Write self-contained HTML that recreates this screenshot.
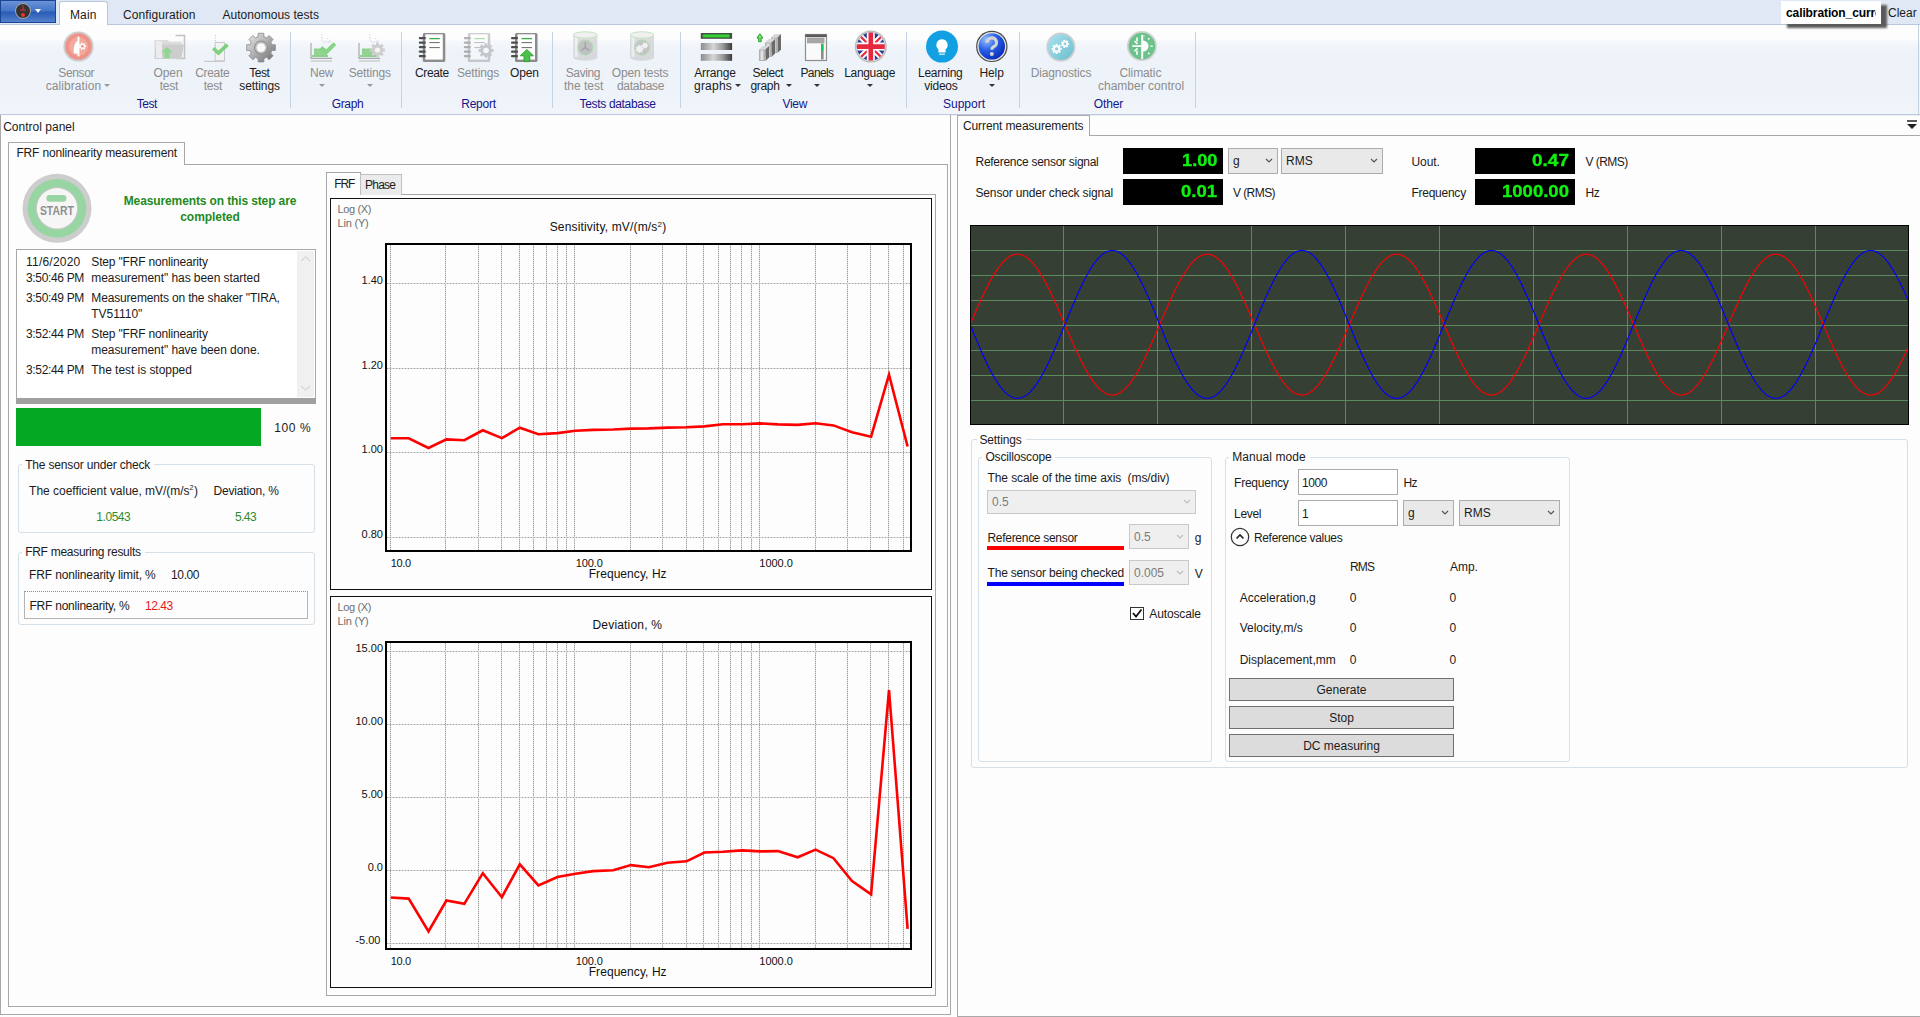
<!DOCTYPE html><html><head><meta charset="utf-8"><style>html,body{margin:0;padding:0;width:1920px;height:1017px;overflow:hidden;background:#fdfdfd;position:relative;font-family:"Liberation Sans",sans-serif}</style></head><body><div style="position:absolute;left:0px;top:0px;width:1920px;height:24px;background:#dfe8f4"></div>
<div style="position:absolute;left:0px;top:24px;width:1920px;height:1px;background:#b7c7dd"></div>
<div style="position:absolute;left:0px;top:25px;width:1920px;height:89px;background:linear-gradient(to bottom,#fdfdfe 0px,#fdfdfe 14px,#f5f8fc 16px,#eef3f9 26px,#eef3f9 70px,#f1f5fa 89px)"></div>
<div style="position:absolute;left:1918px;top:25px;width:1px;height:89px;background:#c3d0e0"></div>
<div style="position:absolute;left:0px;top:114px;width:1920px;height:1px;background:#b9c8dc"></div>
<div style="position:absolute;left:0px;top:115px;width:1920px;height:1px;background:#eef1f4"></div>
<div style="position:absolute;left:0px;top:0px;width:56px;height:23px;background:linear-gradient(to bottom,#6a93d8 0%,#4676c8 45%,#2a5cb8 55%,#5582cc 100%);border:1px solid #1a4494;box-sizing:border-box"></div>
<svg style="position:absolute;left:14px;top:2px" width="40" height="20" viewBox="0 0 40 20"><circle cx="9" cy="9" r="7.5" fill="#333" stroke="#aaa" stroke-width="1"/><circle cx="9" cy="13" r="2" fill="#e33"/><path d="M9 3v5M6 8h6" stroke="#d33" stroke-width="1"/><path d="M21 7h6l-3 4z" fill="#fff"/></svg>
<div style="position:absolute;left:59px;top:1px;width:49px;height:24px;background:#fff;border:1px solid #b7c7dd;border-bottom:none;border-radius:3px 3px 0 0;box-sizing:border-box"></div>
<div style="position:absolute;left:70.00px;top:9.14px;font-family:&quot;Liberation Sans&quot;,sans-serif;font-size:12px;line-height:12px;font-weight:400;color:#1b1b1b;white-space:pre;letter-spacing:0.121px;">Main</div>
<div style="position:absolute;left:123.00px;top:9.14px;font-family:&quot;Liberation Sans&quot;,sans-serif;font-size:12px;line-height:12px;font-weight:400;color:#1b1b1b;white-space:pre;letter-spacing:0.093px;">Configuration</div>
<div style="position:absolute;left:222.50px;top:9.14px;font-family:&quot;Liberation Sans&quot;,sans-serif;font-size:12px;line-height:12px;font-weight:400;color:#1b1b1b;white-space:pre;letter-spacing:0.027px;">Autonomous tests</div>
<div style="position:absolute;left:1787px;top:5px;width:100px;height:23px;background:#5a5a5a;filter:blur(1.2px)"></div>
<div style="position:absolute;left:1781px;top:1px;width:100px;height:23px;background:#fff;overflow:hidden"></div>
<div style="position:absolute;left:1781px;top:1px;width:95px;height:23px;overflow:hidden"><div style="position:absolute;left:5px;top:5.5px;font-family:&quot;Liberation Sans&quot;,sans-serif;font-size:12px;line-height:12px;font-weight:700;color:#000;white-space:pre;letter-spacing:-0.1px">calibration_current</div></div>
<div style="position:absolute;left:1888.00px;top:6.54px;font-family:&quot;Liberation Sans&quot;,sans-serif;font-size:12px;line-height:12px;font-weight:400;color:#1b1b1b;white-space:pre;">Clear</div>
<div style="position:absolute;left:290px;top:32px;width:1px;height:76px;background:#c5d3e4"></div>
<div style="position:absolute;left:401px;top:32px;width:1px;height:76px;background:#c5d3e4"></div>
<div style="position:absolute;left:552px;top:32px;width:1px;height:76px;background:#c5d3e4"></div>
<div style="position:absolute;left:680px;top:32px;width:1px;height:76px;background:#c5d3e4"></div>
<div style="position:absolute;left:906px;top:32px;width:1px;height:76px;background:#c5d3e4"></div>
<div style="position:absolute;left:1019px;top:32px;width:1px;height:76px;background:#c5d3e4"></div>
<div style="position:absolute;left:1195px;top:32px;width:1px;height:76px;background:#c5d3e4"></div>
<div style="position:absolute;left:58.25px;top:66.84px;font-family:&quot;Liberation Sans&quot;,sans-serif;font-size:12px;line-height:12px;font-weight:400;color:#8c8c8c;white-space:pre;letter-spacing:-0.339px;">Sensor</div>
<div style="position:absolute;left:45.75px;top:79.84px;font-family:&quot;Liberation Sans&quot;,sans-serif;font-size:12px;line-height:12px;font-weight:400;color:#8c8c8c;white-space:pre;letter-spacing:0.072px;">calibration</div>
<svg style="position:absolute;left:104px;top:84px" width="6" height="4" viewBox="0 0 6 4"><path d="M0 0h6l-3 3z" fill="#9a9a9a"/></svg>
<div style="position:absolute;left:153.50px;top:66.84px;font-family:&quot;Liberation Sans&quot;,sans-serif;font-size:12px;line-height:12px;font-weight:400;color:#8c8c8c;white-space:pre;letter-spacing:-0.090px;">Open</div>
<div style="position:absolute;left:159.75px;top:79.84px;font-family:&quot;Liberation Sans&quot;,sans-serif;font-size:12px;line-height:12px;font-weight:400;color:#8c8c8c;white-space:pre;letter-spacing:-0.211px;">test</div>
<div style="position:absolute;left:195.25px;top:66.84px;font-family:&quot;Liberation Sans&quot;,sans-serif;font-size:12px;line-height:12px;font-weight:400;color:#8c8c8c;white-space:pre;letter-spacing:-0.339px;">Create</div>
<div style="position:absolute;left:203.75px;top:79.84px;font-family:&quot;Liberation Sans&quot;,sans-serif;font-size:12px;line-height:12px;font-weight:400;color:#8c8c8c;white-space:pre;letter-spacing:-0.211px;">test</div>
<div style="position:absolute;left:249.25px;top:66.84px;font-family:&quot;Liberation Sans&quot;,sans-serif;font-size:12px;line-height:12px;font-weight:400;color:#1b1b1b;white-space:pre;letter-spacing:-0.504px;">Test</div>
<div style="position:absolute;left:239.23px;top:79.84px;font-family:&quot;Liberation Sans&quot;,sans-serif;font-size:12px;line-height:12px;font-weight:400;color:#1b1b1b;white-space:pre;letter-spacing:-0.076px;">settings</div>
<div style="position:absolute;left:136.75px;top:97.64px;font-family:&quot;Liberation Sans&quot;,sans-serif;font-size:12px;line-height:12px;font-weight:400;color:#15158a;white-space:pre;letter-spacing:-0.504px;">Test</div>
<div style="position:absolute;left:309.98px;top:66.84px;font-family:&quot;Liberation Sans&quot;,sans-serif;font-size:12px;line-height:12px;font-weight:400;color:#8c8c8c;white-space:pre;letter-spacing:-0.255px;">New</div>
<svg style="position:absolute;left:319px;top:84px" width="6" height="4" viewBox="0 0 6 4"><path d="M0 0h6l-3 3z" fill="#9a9a9a"/></svg>
<div style="position:absolute;left:348.75px;top:66.84px;font-family:&quot;Liberation Sans&quot;,sans-serif;font-size:12px;line-height:12px;font-weight:400;color:#8c8c8c;white-space:pre;letter-spacing:-0.170px;">Settings</div>
<svg style="position:absolute;left:367px;top:84px" width="6" height="4" viewBox="0 0 6 4"><path d="M0 0h6l-3 3z" fill="#9a9a9a"/></svg>
<div style="position:absolute;left:331.75px;top:97.64px;font-family:&quot;Liberation Sans&quot;,sans-serif;font-size:12px;line-height:12px;font-weight:400;color:#15158a;white-space:pre;letter-spacing:-0.372px;">Graph</div>
<div style="position:absolute;left:415.02px;top:66.84px;font-family:&quot;Liberation Sans&quot;,sans-serif;font-size:12px;line-height:12px;font-weight:400;color:#1b1b1b;white-space:pre;letter-spacing:-0.380px;">Create</div>
<div style="position:absolute;left:456.98px;top:66.84px;font-family:&quot;Liberation Sans&quot;,sans-serif;font-size:12px;line-height:12px;font-weight:400;color:#8c8c8c;white-space:pre;letter-spacing:-0.139px;">Settings</div>
<div style="position:absolute;left:510.02px;top:66.84px;font-family:&quot;Liberation Sans&quot;,sans-serif;font-size:12px;line-height:12px;font-weight:400;color:#1b1b1b;white-space:pre;letter-spacing:-0.152px;">Open</div>
<div style="position:absolute;left:461.25px;top:97.64px;font-family:&quot;Liberation Sans&quot;,sans-serif;font-size:12px;line-height:12px;font-weight:400;color:#15158a;white-space:pre;letter-spacing:-0.255px;">Report</div>
<div style="position:absolute;left:565.77px;top:66.84px;font-family:&quot;Liberation Sans&quot;,sans-serif;font-size:12px;line-height:12px;font-weight:400;color:#8c8c8c;white-space:pre;letter-spacing:-0.409px;">Saving</div>
<div style="position:absolute;left:563.98px;top:79.84px;font-family:&quot;Liberation Sans&quot;,sans-serif;font-size:12px;line-height:12px;font-weight:400;color:#8c8c8c;white-space:pre;letter-spacing:-0.014px;">the test</div>
<div style="position:absolute;left:611.75px;top:66.84px;font-family:&quot;Liberation Sans&quot;,sans-serif;font-size:12px;line-height:12px;font-weight:400;color:#8c8c8c;white-space:pre;letter-spacing:-0.153px;">Open tests</div>
<div style="position:absolute;left:616.98px;top:79.84px;font-family:&quot;Liberation Sans&quot;,sans-serif;font-size:12px;line-height:12px;font-weight:400;color:#8c8c8c;white-space:pre;letter-spacing:-0.268px;">database</div>
<div style="position:absolute;left:579.48px;top:97.64px;font-family:&quot;Liberation Sans&quot;,sans-serif;font-size:12px;line-height:12px;font-weight:400;color:#15158a;white-space:pre;letter-spacing:-0.319px;">Tests database</div>
<div style="position:absolute;left:694.25px;top:66.84px;font-family:&quot;Liberation Sans&quot;,sans-serif;font-size:12px;line-height:12px;font-weight:400;color:#1b1b1b;white-space:pre;letter-spacing:-0.172px;">Arrange</div>
<div style="position:absolute;left:694.00px;top:79.84px;font-family:&quot;Liberation Sans&quot;,sans-serif;font-size:12px;line-height:12px;font-weight:400;color:#1b1b1b;white-space:pre;letter-spacing:0.216px;">graphs</div>
<svg style="position:absolute;left:734.5px;top:84px" width="6" height="4" viewBox="0 0 6 4"><path d="M0 0h6l-3 3z" fill="#333"/></svg>
<div style="position:absolute;left:752.52px;top:66.84px;font-family:&quot;Liberation Sans&quot;,sans-serif;font-size:12px;line-height:12px;font-weight:400;color:#1b1b1b;white-space:pre;letter-spacing:-0.435px;">Select</div>
<div style="position:absolute;left:750.50px;top:79.84px;font-family:&quot;Liberation Sans&quot;,sans-serif;font-size:12px;line-height:12px;font-weight:400;color:#1b1b1b;white-space:pre;letter-spacing:-0.341px;">graph</div>
<svg style="position:absolute;left:785.5px;top:84px" width="6" height="4" viewBox="0 0 6 4"><path d="M0 0h6l-3 3z" fill="#333"/></svg>
<div style="position:absolute;left:800.52px;top:66.84px;font-family:&quot;Liberation Sans&quot;,sans-serif;font-size:12px;line-height:12px;font-weight:400;color:#1b1b1b;white-space:pre;letter-spacing:-0.659px;">Panels</div>
<svg style="position:absolute;left:814px;top:84px" width="6" height="4" viewBox="0 0 6 4"><path d="M0 0h6l-3 3z" fill="#333"/></svg>
<div style="position:absolute;left:844.23px;top:66.84px;font-family:&quot;Liberation Sans&quot;,sans-serif;font-size:12px;line-height:12px;font-weight:400;color:#1b1b1b;white-space:pre;letter-spacing:-0.330px;">Language</div>
<svg style="position:absolute;left:867px;top:84px" width="6" height="4" viewBox="0 0 6 4"><path d="M0 0h6l-3 3z" fill="#333"/></svg>
<div style="position:absolute;left:782.50px;top:97.64px;font-family:&quot;Liberation Sans&quot;,sans-serif;font-size:12px;line-height:12px;font-weight:400;color:#15158a;white-space:pre;letter-spacing:-0.324px;">View</div>
<div style="position:absolute;left:918.00px;top:66.84px;font-family:&quot;Liberation Sans&quot;,sans-serif;font-size:12px;line-height:12px;font-weight:400;color:#1b1b1b;white-space:pre;letter-spacing:-0.277px;">Learning</div>
<div style="position:absolute;left:924.27px;top:79.84px;font-family:&quot;Liberation Sans&quot;,sans-serif;font-size:12px;line-height:12px;font-weight:400;color:#1b1b1b;white-space:pre;letter-spacing:-0.240px;">videos</div>
<div style="position:absolute;left:979.48px;top:66.84px;font-family:&quot;Liberation Sans&quot;,sans-serif;font-size:12px;line-height:12px;font-weight:400;color:#1b1b1b;white-space:pre;letter-spacing:-0.109px;">Help</div>
<svg style="position:absolute;left:989px;top:84px" width="6" height="4" viewBox="0 0 6 4"><path d="M0 0h6l-3 3z" fill="#333"/></svg>
<div style="position:absolute;left:943.00px;top:97.64px;font-family:&quot;Liberation Sans&quot;,sans-serif;font-size:12px;line-height:12px;font-weight:400;color:#15158a;white-space:pre;letter-spacing:-0.004px;">Support</div>
<div style="position:absolute;left:1030.75px;top:66.84px;font-family:&quot;Liberation Sans&quot;,sans-serif;font-size:12px;line-height:12px;font-weight:400;color:#8c8c8c;white-space:pre;letter-spacing:-0.139px;">Diagnostics</div>
<div style="position:absolute;left:1119.53px;top:66.84px;font-family:&quot;Liberation Sans&quot;,sans-serif;font-size:12px;line-height:12px;font-weight:400;color:#8c8c8c;white-space:pre;letter-spacing:-0.115px;">Climatic</div>
<div style="position:absolute;left:1097.97px;top:79.84px;font-family:&quot;Liberation Sans&quot;,sans-serif;font-size:12px;line-height:12px;font-weight:400;color:#8c8c8c;white-space:pre;letter-spacing:0.014px;">chamber control</div>
<div style="position:absolute;left:1093.75px;top:97.64px;font-family:&quot;Liberation Sans&quot;,sans-serif;font-size:12px;line-height:12px;font-weight:400;color:#15158a;white-space:pre;letter-spacing:-0.103px;">Other</div>
<svg style="position:absolute;left:0px;top:0px" width="1200" height="70" viewBox="0 0 1200 70"><circle cx="78.5" cy="46.5" r="15.1" fill="#cdcdcd"/><circle cx="78.5" cy="46.5" r="13.2" fill="#ee928a"/><circle cx="78.5" cy="46.5" r="9.5" fill="#f2aa9c"/><path d="M78.5 36.6V56.4" stroke="#fff" stroke-width="1.8"/><path d="M78.5 40.5C74 41.5 73 50 74 53.5H78.5z" fill="#fff"/><path d="M85.01,45.58 L86.03,45.59 L86.03,47.01 L85.01,47.02 L84.55,47.97 L85.18,48.77 L84.07,49.66 L83.42,48.86 L82.40,49.10 L82.16,50.10 L80.78,49.78 L81.00,48.78 L80.17,48.12 L79.25,48.56 L78.63,47.28 L79.55,46.82 L79.55,45.78 L78.63,45.32 L79.25,44.04 L80.17,44.48 L81.00,43.82 L80.78,42.82 L82.16,42.50 L82.40,43.50 L83.42,43.74 L84.07,42.94 L85.18,43.83 L84.55,44.63Z" fill="#fff"/><circle cx="82.3" cy="46.3" r="1.5" fill="#f0a090"/><path d="M175.5 35.5h9v23h-9" fill="none" stroke="#c2c2c2" stroke-width="1.5"/><path d="M154.5 40h13l2 1.8h12.5V58.8h-27.5z" fill="#dcdcdc"/><path d="M156 44.5h28l-2.8 14.3h-26.7z" fill="#cdcdcd"/><path d="M156 41h6v17h-6z" fill="#ececec"/><path d="M161.2 52.3l5.7-5.3 5.8 5.3h-3.2v6h-5.1v-6z" fill="#8fd68f"/><path d="M215.3 35v7" stroke="#b8c0cc" stroke-dasharray="1 1.5"/><path d="M204.2 61.3h20.5" stroke="#bdbdbd" stroke-width="1"/><rect x="215.2" y="42.5" width="9.3" height="18.3" fill="#f3f3f3" stroke="#c8c8c8"/><path d="M213.3 48.3l5.1 4.7 9.1-8.4" stroke="#7fcf7f" stroke-width="3.6" fill="none"/><defs><linearGradient id="gg" x1="0" y1="0" x2="1" y2="1"><stop offset="0" stop-color="#ececec"/><stop offset="0.45" stop-color="#b4b4b4"/><stop offset="1" stop-color="#6e6e6e"/></linearGradient></defs><path d="M271.92,44.70 L275.32,44.75 L275.32,50.45 L271.92,50.50 L270.77,53.28 L273.14,55.71 L269.11,59.74 L266.68,57.37 L263.90,58.52 L263.85,61.92 L258.15,61.92 L258.10,58.52 L255.32,57.37 L252.89,59.74 L248.86,55.71 L251.23,53.28 L250.08,50.50 L246.68,50.45 L246.68,44.75 L250.08,44.70 L251.23,41.92 L248.86,39.49 L252.89,35.46 L255.32,37.83 L258.10,36.68 L258.15,33.28 L263.85,33.28 L263.90,36.68 L266.68,37.83 L269.11,35.46 L273.14,39.49 L270.77,41.92Z" fill="url(#gg)" stroke="#8a8a8a" stroke-width="0.8"/><circle cx="261" cy="47.6" r="7" fill="#8e8e8e"/><circle cx="261" cy="47.6" r="6" fill="#bdbdbd"/><circle cx="261" cy="47.6" r="4.4" fill="#fafafa"/><path d="M311 43V58.3H332" stroke="#a8a8a8" stroke-width="1.2" fill="none"/><path d="M311 61H332" stroke="#c4c4c4" stroke-width="1.2"/><path d="M322 34.5V42M327 38l4 4H322" stroke="#b9c2cf" stroke-dasharray="1 1.5" fill="none"/><path d="M313 57V56H315V49.5H317V56H319V49.5H321V56H323V49.5H325V56H328" stroke="#88d088" stroke-width="1.8" fill="none"/><path d="M321 47.5l5 5 8.8-8.8" stroke="#86d486" stroke-width="4" fill="none"/><path d="M359 43V58.3H380" stroke="#a8a8a8" stroke-width="1.2" fill="none"/><path d="M359 61H380" stroke="#c4c4c4" stroke-width="1.2"/><path d="M370 34.5V42M375 38l4 4H370" stroke="#b9c2cf" stroke-dasharray="1 1.5" fill="none"/><path d="M361 57V56H363V49.5H365V56H367V49.5H369V56H371V49.5H373V56H376" stroke="#88d088" stroke-width="1.8" fill="none"/><path d="M382.91,48.56 L384.86,48.54 L384.86,51.46 L382.91,51.44 L382.34,52.81 L383.74,54.17 L381.67,56.24 L380.31,54.84 L378.94,55.41 L378.96,57.36 L376.04,57.36 L376.06,55.41 L374.69,54.84 L373.33,56.24 L371.26,54.17 L372.66,52.81 L372.09,51.44 L370.14,51.46 L370.14,48.54 L372.09,48.56 L372.66,47.19 L371.26,45.83 L373.33,43.76 L374.69,45.16 L376.06,44.59 L376.04,42.64 L378.96,42.64 L378.94,44.59 L380.31,45.16 L381.67,43.76 L383.74,45.83 L382.34,47.19Z" fill="#cdcdcd"/><circle cx="377.5" cy="50" r="2.6" fill="#f4f4f4"/><g><rect x="422.8" y="33" width="22.5" height="29" rx="1.5" fill="#8c8c8c"/><rect x="425.3" y="34.3" width="17.5" height="25.3" fill="#fdfdfd"/><rect x="418.8" y="37" width="7" height="2.2" rx="1" fill="#4e4e4e"/><rect x="418.8" y="41.5" width="7" height="2.2" rx="1" fill="#4e4e4e"/><rect x="418.8" y="46" width="7" height="2.2" rx="1" fill="#4e4e4e"/><rect x="418.8" y="50.5" width="7" height="2.2" rx="1" fill="#4e4e4e"/><rect x="418.8" y="55" width="7" height="2.2" rx="1" fill="#4e4e4e"/><path d="M429.3 38.6h10.5" stroke="#34b34a" stroke-width="1.3"/><path d="M429.3 42.6h10.5M429.3 47.6h10.5" stroke="#6a6a6a" stroke-width="1"/></g><g opacity="0.42"><rect x="467.8" y="33" width="22.5" height="29" rx="1.5" fill="#8c8c8c"/><rect x="470.3" y="34.3" width="17.5" height="25.3" fill="#fdfdfd"/><rect x="463.8" y="37" width="7" height="2.2" rx="1" fill="#4e4e4e"/><rect x="463.8" y="41.5" width="7" height="2.2" rx="1" fill="#4e4e4e"/><rect x="463.8" y="46" width="7" height="2.2" rx="1" fill="#4e4e4e"/><rect x="463.8" y="50.5" width="7" height="2.2" rx="1" fill="#4e4e4e"/><rect x="463.8" y="55" width="7" height="2.2" rx="1" fill="#4e4e4e"/><path d="M474.3 38.6h10.5" stroke="#34b34a" stroke-width="1.3"/><path d="M474.3 42.6h10.5M474.3 47.6h10.5" stroke="#6a6a6a" stroke-width="1"/><path d="M491.41,49.06 L493.36,49.04 L493.36,51.96 L491.41,51.94 L490.84,53.31 L492.24,54.67 L490.17,56.74 L488.81,55.34 L487.44,55.91 L487.46,57.86 L484.54,57.86 L484.56,55.91 L483.19,55.34 L481.83,56.74 L479.76,54.67 L481.16,53.31 L480.59,51.94 L478.64,51.96 L478.64,49.04 L480.59,49.06 L481.16,47.69 L479.76,46.33 L481.83,44.26 L483.19,45.66 L484.56,45.09 L484.54,43.14 L487.46,43.14 L487.44,45.09 L488.81,45.66 L490.17,44.26 L492.24,46.33 L490.84,47.69Z" fill="#8a8a8a"/><circle cx="486" cy="50.5" r="2.8" fill="#fff"/></g><g><rect x="515" y="33" width="22.5" height="29" rx="1.5" fill="#8c8c8c"/><rect x="517.5" y="34.3" width="17.5" height="25.3" fill="#fdfdfd"/><rect x="511" y="37" width="7" height="2.2" rx="1" fill="#4e4e4e"/><rect x="511" y="41.5" width="7" height="2.2" rx="1" fill="#4e4e4e"/><rect x="511" y="46" width="7" height="2.2" rx="1" fill="#4e4e4e"/><rect x="511" y="50.5" width="7" height="2.2" rx="1" fill="#4e4e4e"/><rect x="511" y="55" width="7" height="2.2" rx="1" fill="#4e4e4e"/><path d="M521.5 38.6h10.5" stroke="#34b34a" stroke-width="1.3"/><path d="M521.5 42.6h10.5M521.5 47.6h10.5" stroke="#6a6a6a" stroke-width="1"/><path d="M520.3 55.8l6.6-6.3 6.6 6.3h-3.7v5.8h-5.8v-5.8z" fill="#4cbf4c" stroke="#1e9a1e" stroke-width="0.8"/></g><g opacity="0.62"><path d="M573.3 35V57.5A12 3.3 0 0 0 597.3 57.5V35z" fill="#c9c9c9"/><path d="M576.3 36V57" stroke="#e9e9e9" stroke-width="3"/><ellipse cx="585.3" cy="35" rx="12" ry="3.2" fill="#e9e9e9" stroke="#9ed69e"/><circle cx="585.3" cy="47.5" r="7.5" fill="#a2a2a2" stroke="#86cc86"/><path d="M585.3 42v5.5l-4 3M585.3 47.5l4 3" stroke="#6b6b6b" stroke-width="1.2" fill="none"/></g><g opacity="0.62"><path d="M630 35V57.5A12 3.3 0 0 0 654 57.5V35z" fill="#c9c9c9"/><path d="M633 36V57" stroke="#e9e9e9" stroke-width="3"/><ellipse cx="642" cy="35" rx="12" ry="3.2" fill="#e9e9e9" stroke="#9ed69e"/><circle cx="642" cy="47.5" r="7.5" fill="#a8a8a8" stroke="#86cc86"/><path d="M642.59,48.18 L643.63,48.21 L643.63,49.79 L642.59,49.82 L642.07,50.90 L642.69,51.73 L641.46,52.72 L640.78,51.93 L639.61,52.20 L639.35,53.20 L637.81,52.85 L638.01,51.83 L637.07,51.08 L636.12,51.50 L635.44,50.08 L636.36,49.60 L636.36,48.40 L635.44,47.92 L636.12,46.50 L637.07,46.92 L638.01,46.17 L637.81,45.15 L639.35,44.80 L639.61,45.80 L640.78,46.07 L641.46,45.28 L642.69,46.27 L642.07,47.10Z" fill="#eee"/><path d="M647.29,44.78 L648.12,44.80 L648.12,46.20 L647.29,46.22 L646.77,47.12 L647.17,47.86 L645.96,48.55 L645.52,47.84 L644.48,47.84 L644.04,48.55 L642.83,47.86 L643.23,47.12 L642.71,46.22 L641.88,46.20 L641.88,44.80 L642.71,44.78 L643.23,43.88 L642.83,43.14 L644.04,42.45 L644.48,43.16 L645.52,43.16 L645.96,42.45 L647.17,43.14 L646.77,43.88Z" fill="#eee"/></g><defs><linearGradient id="gb" x1="0" x2="1"><stop offset="0" stop-color="#8c8c8c"/><stop offset="0.4" stop-color="#d6d6d6"/><stop offset="0.7" stop-color="#9a9a9a"/><stop offset="1" stop-color="#3c3c3c"/></linearGradient></defs><rect x="700.8" y="33" width="31.3" height="5.8" fill="#4a4a4a"/><rect x="702.5" y="34.3" width="27.5" height="3.2" rx="1.6" fill="#36d036" stroke="#1f8f1f" stroke-width="0.5"/><rect x="700.8" y="43" width="31.3" height="7" fill="url(#gb)"/><rect x="700.8" y="54" width="31.3" height="6.8" fill="url(#gb)"/><path d="M771 37.5l3.5 -3.5h6.5l-3.5 3.5z" fill="#d8d8d8"/><path d="M777.5 37.5l3.5 -3.5v15.5l-3.5 3.5z" fill="#6a6a6a"/><rect x="771" y="37.5" width="6.5" height="15.5" fill="#b0b0b0"/><rect x="772.5" y="38.5" width="2.9250000000000003" height="13.5" fill="#e2e2e2"/><path d="M765 42.5l3.5 -3.5h6.5l-3.5 3.5z" fill="#d8d8d8"/><path d="M771.5 42.5l3.5 -3.5v14.5l-3.5 3.5z" fill="#6a6a6a"/><rect x="765" y="42.5" width="6.5" height="14.5" fill="#b0b0b0"/><rect x="766.5" y="43.5" width="2.9250000000000003" height="12.5" fill="#e2e2e2"/><path d="M759 49.5l3.5 -3.5h6.5l-3.5 3.5z" fill="#d8d8d8"/><path d="M765.5 49.5l3.5 -3.5v11.5l-3.5 3.5z" fill="#6a6a6a"/><rect x="759" y="49.5" width="6.5" height="11.5" fill="#b0b0b0"/><rect x="760.5" y="50.5" width="2.9250000000000003" height="9.5" fill="#e2e2e2"/><path d="M756.9 38l3-4.2 3 4.2h-1.8v3.7h-2.4V38z" fill="#7fdc7f" stroke="#0f9a0f" stroke-width="0.9"/><rect x="805.5" y="34.5" width="21" height="26" fill="#fafafa" stroke="#8e8e8e" stroke-width="1.2"/><rect x="805.5" y="34.5" width="21" height="2.5" fill="#5a5a5a"/><rect x="807" y="37.5" width="17.5" height="5.8" fill="#a6a6a6"/><rect x="821" y="43.5" width="2.6" height="16" fill="#8c8c8c"/><rect x="821.3" y="44.7" width="2" height="6.2" fill="#14c850"/><defs><clipPath id="cf"><circle cx="870.8" cy="46.6" r="14"/></clipPath></defs><circle cx="870.8" cy="46.6" r="16" fill="#bdbdbd"/><circle cx="870.8" cy="46.6" r="14.6" fill="#e6e6e6"/><g clip-path="url(#cf)"><rect x="855" y="31" width="32" height="32" fill="#2b3d8f"/><path d="M855 31L887 63M887 31L855 63" stroke="#fff" stroke-width="6"/><path d="M855 31L887 63M887 31L855 63" stroke="#e8283c" stroke-width="2.2"/><path d="M870.8 31v32M855 46.6h32" stroke="#fff" stroke-width="8"/><path d="M870.8 31v32M855 46.6h32" stroke="#e8283c" stroke-width="4.6"/></g><circle cx="942" cy="46.6" r="16" fill="#12a0e2"/><path d="M942 39.3a5.6 5.6 0 0 0-3.6 9.9v3.4h7.2v-3.4A5.6 5.6 0 0 0 942 39.3z" fill="#fff"/><rect x="939.2" y="53.6" width="5.6" height="1.3" fill="#d6f1ff"/><defs><radialGradient id="hg" cx="0.3" cy="0.25" r="0.85"><stop offset="0" stop-color="#9cc4ff"/><stop offset="0.45" stop-color="#2a62e6"/><stop offset="1" stop-color="#0726b8"/></radialGradient></defs><circle cx="991.8" cy="46.4" r="15.7" fill="#4a4a4a"/><circle cx="991.8" cy="46.4" r="14.5" fill="#e8e8e8"/><circle cx="991.8" cy="46.4" r="13.2" fill="url(#hg)"/><path d="M987.3 42.6a4.6 4.6 0 1 1 6.3 4.2c-1.3.6-1.8 1.3-1.8 3" stroke="#d4d4d4" stroke-width="3.2" fill="none"/><circle cx="991.8" cy="54" r="2" fill="#d4d4d4"/><defs><linearGradient id="dg" x1="0" y1="0" x2="1" y2="1"><stop offset="0" stop-color="#a9e3ee"/><stop offset="1" stop-color="#6cbccd"/></linearGradient></defs><circle cx="1060.9" cy="47.1" r="14.6" fill="#cfcfcf"/><circle cx="1060.9" cy="47.1" r="12.8" fill="url(#dg)"/><path d="M1060.37,47.90 L1061.70,47.89 L1061.70,49.91 L1060.37,49.90 L1059.97,50.86 L1060.92,51.79 L1059.49,53.22 L1058.56,52.27 L1057.60,52.67 L1057.61,54.00 L1055.59,54.00 L1055.60,52.67 L1054.64,52.27 L1053.71,53.22 L1052.28,51.79 L1053.23,50.86 L1052.83,49.90 L1051.50,49.91 L1051.50,47.89 L1052.83,47.90 L1053.23,46.94 L1052.28,46.01 L1053.71,44.58 L1054.64,45.53 L1055.60,45.13 L1055.59,43.80 L1057.61,43.80 L1057.60,45.13 L1058.56,45.53 L1059.49,44.58 L1060.92,46.01 L1059.97,46.94Z" fill="#fafafa"/><circle cx="1056.6" cy="48.9" r="1.7" fill="#8fd0dc"/><path d="M1067.96,43.00 L1069.09,42.97 L1069.09,44.83 L1067.96,44.80 L1067.56,45.65 L1068.28,46.52 L1066.82,47.68 L1066.14,46.78 L1065.22,46.99 L1065.00,48.10 L1063.18,47.68 L1063.46,46.59 L1062.72,46.00 L1061.72,46.52 L1060.91,44.83 L1061.94,44.37 L1061.94,43.43 L1060.91,42.97 L1061.72,41.28 L1062.72,41.80 L1063.46,41.21 L1063.18,40.12 L1065.00,39.70 L1065.22,40.81 L1066.14,41.02 L1066.82,40.12 L1068.28,41.28 L1067.56,42.15Z" fill="#fafafa"/><circle cx="1065" cy="43.9" r="1.3" fill="#8fd0dc"/><circle cx="1141.9" cy="46.1" r="15" fill="#d2d2d2"/><circle cx="1141.9" cy="46.1" r="13.3" fill="#6cc28b"/><path d="M1142.2 34.9V58.9" stroke="#fff" stroke-width="2"/><path d="M1132.2 46.1h9M1134.5 41l3 3M1134.5 51.2l3-3M1137 37.5v4M1137 54.7v-4" stroke="#fff" stroke-width="1.6"/><path d="M1143 40.6a5.5 5.5 0 0 1 0 11z" fill="#fff"/><path d="M1150.3 46.1h2.5M1148.2 39.5l1.3-1.5M1148.2 52.7l1.3 1.5M1144 36.5v-1" stroke="#fff" stroke-width="1.3"/></svg>
<div style="position:absolute;left:0px;top:115px;width:951px;height:900px;background:#fdfdfd;border:1px solid #a8a8a8;border-top:none;box-sizing:border-box"></div>
<div style="position:absolute;left:3.20px;top:120.94px;font-family:&quot;Liberation Sans&quot;,sans-serif;font-size:12px;line-height:12px;font-weight:400;color:#1b1b1b;white-space:pre;letter-spacing:0.008px;">Control panel</div>
<div style="position:absolute;left:8px;top:164px;width:940px;height:843px;border:1px solid #a8a8a8;box-sizing:border-box"></div>
<div style="position:absolute;left:8px;top:142px;width:177px;height:23px;background:#fdfdfd;border:1px solid #a8a8a8;border-bottom:none;box-sizing:border-box"></div>
<div style="position:absolute;left:16.40px;top:146.54px;font-family:&quot;Liberation Sans&quot;,sans-serif;font-size:12px;line-height:12px;font-weight:400;color:#1b1b1b;white-space:pre;letter-spacing:-0.151px;">FRF nonlinearity measurement</div>
<svg style="position:absolute;left:21px;top:172px" width="72" height="72" viewBox="0 0 72 72"><circle cx="36" cy="36.3" r="34.5" fill="#cdcdcd"/><circle cx="36" cy="36.3" r="29.3" fill="#97d6a2"/><circle cx="36" cy="36.3" r="21.2" fill="#c6c6c6"/><circle cx="36" cy="36.3" r="20.2" fill="#f6f6f6"/><rect x="25.4" y="23" width="20" height="6.7" rx="3.3" fill="#97d6a2"/><text x="35.9" y="43.2" text-anchor="middle" font-family="Liberation Sans" font-weight="700" font-size="12.5" fill="#8e8e8e" textLength="34" lengthAdjust="spacingAndGlyphs">START</text></svg>
<div style="position:absolute;left:123.75px;top:195.04px;font-family:&quot;Liberation Sans&quot;,sans-serif;font-size:12px;line-height:12px;font-weight:700;color:#1f8a1f;white-space:pre;letter-spacing:-0.123px;">Measurements on this step are</div>
<div style="position:absolute;left:180.25px;top:211.04px;font-family:&quot;Liberation Sans&quot;,sans-serif;font-size:12px;line-height:12px;font-weight:700;color:#1f8a1f;white-space:pre;letter-spacing:-0.057px;">completed</div>
<div style="position:absolute;left:16px;top:249px;width:300px;height:155px;background:#fff;border:1px solid #a8a8a8;box-sizing:border-box"></div>
<div style="position:absolute;left:297px;top:251px;width:17px;height:146px;background:#f0f0f0"></div>
<svg style="position:absolute;left:299px;top:255px" width="13" height="8" viewBox="0 0 13 8"><path d="M2 6l4.5-4 4.5 4" stroke="#c8c8c8" fill="none"/></svg>
<svg style="position:absolute;left:299px;top:384px" width="13" height="8" viewBox="0 0 13 8"><path d="M2 2l4.5 4 4.5-4" stroke="#c8c8c8" fill="none"/></svg>
<div style="position:absolute;left:16px;top:398px;width:300px;height:6px;background:#a0a0a0"></div>
<div style="position:absolute;left:26.00px;top:256.04px;font-family:&quot;Liberation Sans&quot;,sans-serif;font-size:12px;line-height:12px;font-weight:400;color:#1b1b1b;white-space:pre;letter-spacing:0.222px;">11/6/2020</div>
<div style="position:absolute;left:91.30px;top:256.04px;font-family:&quot;Liberation Sans&quot;,sans-serif;font-size:12px;line-height:12px;font-weight:400;color:#1b1b1b;white-space:pre;letter-spacing:-0.173px;">Step &quot;FRF nonlinearity</div>
<div style="position:absolute;left:26.00px;top:272.14px;font-family:&quot;Liberation Sans&quot;,sans-serif;font-size:12px;line-height:12px;font-weight:400;color:#1b1b1b;white-space:pre;letter-spacing:-0.338px;">3:50:46 PM</div>
<div style="position:absolute;left:91.30px;top:272.14px;font-family:&quot;Liberation Sans&quot;,sans-serif;font-size:12px;line-height:12px;font-weight:400;color:#1b1b1b;white-space:pre;letter-spacing:-0.064px;">measurement&quot; has been started</div>
<div style="position:absolute;left:26.00px;top:292.24px;font-family:&quot;Liberation Sans&quot;,sans-serif;font-size:12px;line-height:12px;font-weight:400;color:#1b1b1b;white-space:pre;letter-spacing:-0.338px;">3:50:49 PM</div>
<div style="position:absolute;left:91.30px;top:292.24px;font-family:&quot;Liberation Sans&quot;,sans-serif;font-size:12px;line-height:12px;font-weight:400;color:#1b1b1b;white-space:pre;letter-spacing:-0.157px;">Measurements on the shaker &quot;TIRA,</div>
<div style="position:absolute;left:91.30px;top:308.04px;font-family:&quot;Liberation Sans&quot;,sans-serif;font-size:12px;line-height:12px;font-weight:400;color:#1b1b1b;white-space:pre;letter-spacing:-0.023px;">TV51110&quot;</div>
<div style="position:absolute;left:26.00px;top:328.04px;font-family:&quot;Liberation Sans&quot;,sans-serif;font-size:12px;line-height:12px;font-weight:400;color:#1b1b1b;white-space:pre;letter-spacing:-0.338px;">3:52:44 PM</div>
<div style="position:absolute;left:91.30px;top:328.04px;font-family:&quot;Liberation Sans&quot;,sans-serif;font-size:12px;line-height:12px;font-weight:400;color:#1b1b1b;white-space:pre;letter-spacing:-0.173px;">Step &quot;FRF nonlinearity</div>
<div style="position:absolute;left:91.30px;top:344.04px;font-family:&quot;Liberation Sans&quot;,sans-serif;font-size:12px;line-height:12px;font-weight:400;color:#1b1b1b;white-space:pre;letter-spacing:-0.067px;">measurement&quot; have been done.</div>
<div style="position:absolute;left:26.00px;top:364.04px;font-family:&quot;Liberation Sans&quot;,sans-serif;font-size:12px;line-height:12px;font-weight:400;color:#1b1b1b;white-space:pre;letter-spacing:-0.338px;">3:52:44 PM</div>
<div style="position:absolute;left:91.30px;top:364.04px;font-family:&quot;Liberation Sans&quot;,sans-serif;font-size:12px;line-height:12px;font-weight:400;color:#1b1b1b;white-space:pre;letter-spacing:-0.047px;">The test is stopped</div>
<div style="position:absolute;left:16px;top:408px;width:245px;height:38px;background:#05a823"></div>
<div style="position:absolute;left:274.20px;top:422.34px;font-family:&quot;Liberation Sans&quot;,sans-serif;font-size:12px;line-height:12px;font-weight:400;color:#1b1b1b;white-space:pre;letter-spacing:0.594px;">100 %</div>
<div style="position:absolute;left:18px;top:464px;width:297px;height:69px;border:1px solid #d5dfe5;border-radius:3px;box-sizing:border-box"></div>
<div style="position:absolute;left:22.2px;top:462px;width:132px;height:5px;background:#fdfdfd"></div>
<div style="position:absolute;left:25.20px;top:458.94px;font-family:&quot;Liberation Sans&quot;,sans-serif;font-size:12px;line-height:12px;font-weight:400;color:#1b1b1b;white-space:pre;letter-spacing:-0.170px;">The sensor under check</div>
<div style="position:absolute;left:29.10px;top:484.84px;font-family:&quot;Liberation Sans&quot;,sans-serif;font-size:12px;line-height:12px;font-weight:400;color:#1b1b1b;white-space:pre;letter-spacing:-0.023px;">The coefficient value, mV/(m/s</div>
<div style="position:absolute;left:194.00px;top:484.84px;font-family:&quot;Liberation Sans&quot;,sans-serif;font-size:12px;line-height:12px;font-weight:400;color:#1b1b1b;white-space:pre;">)</div>
<div style="position:absolute;left:189.60px;top:483.67px;font-family:&quot;Liberation Sans&quot;,sans-serif;font-size:7px;line-height:7px;font-weight:400;color:#1b1b1b;white-space:pre;">2</div>
<div style="position:absolute;left:213.40px;top:484.84px;font-family:&quot;Liberation Sans&quot;,sans-serif;font-size:12px;line-height:12px;font-weight:400;color:#1b1b1b;white-space:pre;letter-spacing:-0.156px;">Deviation, %</div>
<div style="position:absolute;left:96.30px;top:511.24px;font-family:&quot;Liberation Sans&quot;,sans-serif;font-size:12px;line-height:12px;font-weight:400;color:#2e8b2e;white-space:pre;letter-spacing:-0.451px;">1.0543</div>
<div style="position:absolute;left:235.00px;top:511.24px;font-family:&quot;Liberation Sans&quot;,sans-serif;font-size:12px;line-height:12px;font-weight:400;color:#2e8b2e;white-space:pre;letter-spacing:-0.590px;">5.43</div>
<div style="position:absolute;left:18px;top:552px;width:297px;height:73px;border:1px solid #d5dfe5;border-radius:3px;box-sizing:border-box"></div>
<div style="position:absolute;left:22.2px;top:550px;width:122.5px;height:5px;background:#fdfdfd"></div>
<div style="position:absolute;left:25.20px;top:545.84px;font-family:&quot;Liberation Sans&quot;,sans-serif;font-size:12px;line-height:12px;font-weight:400;color:#1b1b1b;white-space:pre;letter-spacing:-0.280px;">FRF measuring results</div>
<div style="position:absolute;left:29.10px;top:569.34px;font-family:&quot;Liberation Sans&quot;,sans-serif;font-size:12px;line-height:12px;font-weight:400;color:#1b1b1b;white-space:pre;letter-spacing:-0.141px;">FRF nonlinearity limit, %</div>
<div style="position:absolute;left:171.10px;top:569.34px;font-family:&quot;Liberation Sans&quot;,sans-serif;font-size:12px;line-height:12px;font-weight:400;color:#1b1b1b;white-space:pre;letter-spacing:-0.406px;">10.00</div>
<div style="position:absolute;left:24px;top:591px;width:284px;height:28px;border:1px solid #b4b4b4;border-top:1px dotted #8a8a8a;box-sizing:border-box"></div>
<div style="position:absolute;left:29.50px;top:600.44px;font-family:&quot;Liberation Sans&quot;,sans-serif;font-size:12px;line-height:12px;font-weight:400;color:#1b1b1b;white-space:pre;letter-spacing:-0.236px;">FRF nonlinearity, %</div>
<div style="position:absolute;left:145.10px;top:600.44px;font-family:&quot;Liberation Sans&quot;,sans-serif;font-size:12px;line-height:12px;font-weight:400;color:#e81818;white-space:pre;letter-spacing:-0.506px;">12.43</div>
<div style="position:absolute;left:326px;top:194px;width:610px;height:802px;border:1px solid #a8a8a8;box-sizing:border-box;background:#fdfdfd"></div>
<div style="position:absolute;left:326px;top:172px;width:35px;height:23px;background:#fdfdfd;border:1px solid #a8a8a8;border-bottom:none;box-sizing:border-box"></div>
<div style="position:absolute;left:360px;top:174px;width:42px;height:21px;background:#ebebeb;border:1px solid #c0c0c0;border-bottom:none;box-sizing:border-box"></div>
<div style="position:absolute;left:334.20px;top:177.54px;font-family:&quot;Liberation Sans&quot;,sans-serif;font-size:12px;line-height:12px;font-weight:400;color:#1b1b1b;white-space:pre;letter-spacing:-1.109px;">FRF</div>
<div style="position:absolute;left:365.10px;top:179.04px;font-family:&quot;Liberation Sans&quot;,sans-serif;font-size:12px;line-height:12px;font-weight:400;color:#1b1b1b;white-space:pre;letter-spacing:-0.806px;">Phase</div>
<div style="position:absolute;left:330px;top:198px;width:602px;height:392px;border:1px solid #111;box-sizing:border-box;background:#fdfdfd"></div>
<div style="position:absolute;left:337.60px;top:203.69px;font-family:&quot;Liberation Sans&quot;,sans-serif;font-size:11px;line-height:11px;font-weight:400;color:#6e6e6e;white-space:pre;letter-spacing:-0.368px;">Log (X)</div>
<div style="position:absolute;left:337.60px;top:217.69px;font-family:&quot;Liberation Sans&quot;,sans-serif;font-size:11px;line-height:11px;font-weight:400;color:#6e6e6e;white-space:pre;letter-spacing:-0.201px;">Lin (Y)</div>
<div style="position:absolute;left:549.65px;top:220.64px;font-family:&quot;Liberation Sans&quot;,sans-serif;font-size:12px;line-height:12px;font-weight:400;color:#111;white-space:pre;letter-spacing:0.172px;">Sensitivity, mV/(m/s<sup style="font-size:8px;vertical-align:4px;line-height:0">2</sup>)</div>
<svg style="position:absolute;left:385px;top:243px" width="527" height="309" viewBox="0 0 527 309"><path d="M5.5 2V307" stroke="#dadada" stroke-width="1"/><path d="M5.5 2V307" stroke="#a0a0a0" stroke-width="1" stroke-dasharray="1 1"/><path d="M60.5 2V307" stroke="#dadada" stroke-width="1"/><path d="M60.5 2V307" stroke="#a0a0a0" stroke-width="1" stroke-dasharray="1 1"/><path d="M93.5 2V307" stroke="#dadada" stroke-width="1"/><path d="M93.5 2V307" stroke="#a0a0a0" stroke-width="1" stroke-dasharray="1 1"/><path d="M116.5 2V307" stroke="#dadada" stroke-width="1"/><path d="M116.5 2V307" stroke="#a0a0a0" stroke-width="1" stroke-dasharray="1 1"/><path d="M134.5 2V307" stroke="#dadada" stroke-width="1"/><path d="M134.5 2V307" stroke="#a0a0a0" stroke-width="1" stroke-dasharray="1 1"/><path d="M148.5 2V307" stroke="#dadada" stroke-width="1"/><path d="M148.5 2V307" stroke="#a0a0a0" stroke-width="1" stroke-dasharray="1 1"/><path d="M161.5 2V307" stroke="#dadada" stroke-width="1"/><path d="M161.5 2V307" stroke="#a0a0a0" stroke-width="1" stroke-dasharray="1 1"/><path d="M172.5 2V307" stroke="#dadada" stroke-width="1"/><path d="M172.5 2V307" stroke="#a0a0a0" stroke-width="1" stroke-dasharray="1 1"/><path d="M181.5 2V307" stroke="#dadada" stroke-width="1"/><path d="M181.5 2V307" stroke="#a0a0a0" stroke-width="1" stroke-dasharray="1 1"/><path d="M189.5 2V307" stroke="#dadada" stroke-width="1"/><path d="M189.5 2V307" stroke="#a0a0a0" stroke-width="1" stroke-dasharray="1 1"/><path d="M245.5 2V307" stroke="#dadada" stroke-width="1"/><path d="M245.5 2V307" stroke="#a0a0a0" stroke-width="1" stroke-dasharray="1 1"/><path d="M277.5 2V307" stroke="#dadada" stroke-width="1"/><path d="M277.5 2V307" stroke="#a0a0a0" stroke-width="1" stroke-dasharray="1 1"/><path d="M301.5 2V307" stroke="#dadada" stroke-width="1"/><path d="M301.5 2V307" stroke="#a0a0a0" stroke-width="1" stroke-dasharray="1 1"/><path d="M318.5 2V307" stroke="#dadada" stroke-width="1"/><path d="M318.5 2V307" stroke="#a0a0a0" stroke-width="1" stroke-dasharray="1 1"/><path d="M333.5 2V307" stroke="#dadada" stroke-width="1"/><path d="M333.5 2V307" stroke="#a0a0a0" stroke-width="1" stroke-dasharray="1 1"/><path d="M345.5 2V307" stroke="#dadada" stroke-width="1"/><path d="M345.5 2V307" stroke="#a0a0a0" stroke-width="1" stroke-dasharray="1 1"/><path d="M356.5 2V307" stroke="#dadada" stroke-width="1"/><path d="M356.5 2V307" stroke="#a0a0a0" stroke-width="1" stroke-dasharray="1 1"/><path d="M366.5 2V307" stroke="#dadada" stroke-width="1"/><path d="M366.5 2V307" stroke="#a0a0a0" stroke-width="1" stroke-dasharray="1 1"/><path d="M374.5 2V307" stroke="#dadada" stroke-width="1"/><path d="M374.5 2V307" stroke="#a0a0a0" stroke-width="1" stroke-dasharray="1 1"/><path d="M430.5 2V307" stroke="#dadada" stroke-width="1"/><path d="M430.5 2V307" stroke="#a0a0a0" stroke-width="1" stroke-dasharray="1 1"/><path d="M462.5 2V307" stroke="#dadada" stroke-width="1"/><path d="M462.5 2V307" stroke="#a0a0a0" stroke-width="1" stroke-dasharray="1 1"/><path d="M485.5 2V307" stroke="#dadada" stroke-width="1"/><path d="M485.5 2V307" stroke="#a0a0a0" stroke-width="1" stroke-dasharray="1 1"/><path d="M503.5 2V307" stroke="#dadada" stroke-width="1"/><path d="M503.5 2V307" stroke="#a0a0a0" stroke-width="1" stroke-dasharray="1 1"/><path d="M518.5 2V307" stroke="#dadada" stroke-width="1"/><path d="M518.5 2V307" stroke="#a0a0a0" stroke-width="1" stroke-dasharray="1 1"/><path d="M2 40.5H525" stroke="#d8d8d8" stroke-width="1"/><path d="M2 40.5H525" stroke="#a0a0a0" stroke-width="1" stroke-dasharray="1 2"/><path d="M2 125.5H525" stroke="#d8d8d8" stroke-width="1"/><path d="M2 125.5H525" stroke="#a0a0a0" stroke-width="1" stroke-dasharray="1 2"/><path d="M2 209.5H525" stroke="#d8d8d8" stroke-width="1"/><path d="M2 209.5H525" stroke="#a0a0a0" stroke-width="1" stroke-dasharray="1 2"/><path d="M2 294.5H525" stroke="#d8d8d8" stroke-width="1"/><path d="M2 294.5H525" stroke="#a0a0a0" stroke-width="1" stroke-dasharray="1 2"/><polyline points="5.8,195.3 23.7,195.3 43.5,205.0 61.4,196.4 79.3,197.2 97.8,187.3 116.9,195.1 134.8,184.7 153.4,191.2 172.5,190.1 190.4,187.8 208.3,186.9 228.1,186.5 246.0,185.6 263.9,185.4 282.4,184.6 301.5,184.2 319.4,183.4 338.0,181.3 357.1,181.3 375.0,180.4 392.9,181.4 412.7,181.9 430.6,180.3 448.5,182.4 467.0,189.3 486.1,193.7 504.0,131.7 522.6,203.5" fill="none" stroke="#ff0000" stroke-width="2.6" stroke-linejoin="miter" stroke-miterlimit="4"/><rect x="1" y="1" width="525" height="307" fill="none" stroke="#000" stroke-width="2"/></svg>
<div style="position:absolute;left:361.58px;top:275.39px;font-family:&quot;Liberation Sans&quot;,sans-serif;font-size:11px;line-height:11px;font-weight:400;color:#111;white-space:pre;">1.40</div>
<div style="position:absolute;left:361.58px;top:360.39px;font-family:&quot;Liberation Sans&quot;,sans-serif;font-size:11px;line-height:11px;font-weight:400;color:#111;white-space:pre;">1.20</div>
<div style="position:absolute;left:361.58px;top:444.49px;font-family:&quot;Liberation Sans&quot;,sans-serif;font-size:11px;line-height:11px;font-weight:400;color:#111;white-space:pre;">1.00</div>
<div style="position:absolute;left:361.58px;top:529.39px;font-family:&quot;Liberation Sans&quot;,sans-serif;font-size:11px;line-height:11px;font-weight:400;color:#111;white-space:pre;">0.80</div>
<div style="position:absolute;left:390.80px;top:557.59px;font-family:&quot;Liberation Sans&quot;,sans-serif;font-size:11px;line-height:11px;font-weight:400;color:#111;white-space:pre;letter-spacing:-0.355px;">10.0</div>
<div style="position:absolute;left:575.70px;top:557.59px;font-family:&quot;Liberation Sans&quot;,sans-serif;font-size:11px;line-height:11px;font-weight:400;color:#111;white-space:pre;letter-spacing:-0.106px;">100.0</div>
<div style="position:absolute;left:759.30px;top:557.59px;font-family:&quot;Liberation Sans&quot;,sans-serif;font-size:11px;line-height:11px;font-weight:400;color:#111;white-space:pre;letter-spacing:-0.026px;">1000.0</div>
<div style="position:absolute;left:588.70px;top:568.14px;font-family:&quot;Liberation Sans&quot;,sans-serif;font-size:12px;line-height:12px;font-weight:400;color:#111;white-space:pre;letter-spacing:0.066px;">Frequency, Hz</div>
<div style="position:absolute;left:330px;top:596px;width:602px;height:392px;border:1px solid #111;box-sizing:border-box;background:#fdfdfd"></div>
<div style="position:absolute;left:337.60px;top:601.69px;font-family:&quot;Liberation Sans&quot;,sans-serif;font-size:11px;line-height:11px;font-weight:400;color:#6e6e6e;white-space:pre;letter-spacing:-0.368px;">Log (X)</div>
<div style="position:absolute;left:337.60px;top:615.69px;font-family:&quot;Liberation Sans&quot;,sans-serif;font-size:11px;line-height:11px;font-weight:400;color:#6e6e6e;white-space:pre;letter-spacing:-0.201px;">Lin (Y)</div>
<div style="position:absolute;left:592.50px;top:618.64px;font-family:&quot;Liberation Sans&quot;,sans-serif;font-size:12px;line-height:12px;font-weight:400;color:#111;white-space:pre;letter-spacing:0.185px;">Deviation, %</div>
<svg style="position:absolute;left:385px;top:641px" width="527" height="309" viewBox="0 0 527 309"><path d="M5.5 2V307" stroke="#dadada" stroke-width="1"/><path d="M5.5 2V307" stroke="#a0a0a0" stroke-width="1" stroke-dasharray="1 1"/><path d="M60.5 2V307" stroke="#dadada" stroke-width="1"/><path d="M60.5 2V307" stroke="#a0a0a0" stroke-width="1" stroke-dasharray="1 1"/><path d="M93.5 2V307" stroke="#dadada" stroke-width="1"/><path d="M93.5 2V307" stroke="#a0a0a0" stroke-width="1" stroke-dasharray="1 1"/><path d="M116.5 2V307" stroke="#dadada" stroke-width="1"/><path d="M116.5 2V307" stroke="#a0a0a0" stroke-width="1" stroke-dasharray="1 1"/><path d="M134.5 2V307" stroke="#dadada" stroke-width="1"/><path d="M134.5 2V307" stroke="#a0a0a0" stroke-width="1" stroke-dasharray="1 1"/><path d="M148.5 2V307" stroke="#dadada" stroke-width="1"/><path d="M148.5 2V307" stroke="#a0a0a0" stroke-width="1" stroke-dasharray="1 1"/><path d="M161.5 2V307" stroke="#dadada" stroke-width="1"/><path d="M161.5 2V307" stroke="#a0a0a0" stroke-width="1" stroke-dasharray="1 1"/><path d="M172.5 2V307" stroke="#dadada" stroke-width="1"/><path d="M172.5 2V307" stroke="#a0a0a0" stroke-width="1" stroke-dasharray="1 1"/><path d="M181.5 2V307" stroke="#dadada" stroke-width="1"/><path d="M181.5 2V307" stroke="#a0a0a0" stroke-width="1" stroke-dasharray="1 1"/><path d="M189.5 2V307" stroke="#dadada" stroke-width="1"/><path d="M189.5 2V307" stroke="#a0a0a0" stroke-width="1" stroke-dasharray="1 1"/><path d="M245.5 2V307" stroke="#dadada" stroke-width="1"/><path d="M245.5 2V307" stroke="#a0a0a0" stroke-width="1" stroke-dasharray="1 1"/><path d="M277.5 2V307" stroke="#dadada" stroke-width="1"/><path d="M277.5 2V307" stroke="#a0a0a0" stroke-width="1" stroke-dasharray="1 1"/><path d="M301.5 2V307" stroke="#dadada" stroke-width="1"/><path d="M301.5 2V307" stroke="#a0a0a0" stroke-width="1" stroke-dasharray="1 1"/><path d="M318.5 2V307" stroke="#dadada" stroke-width="1"/><path d="M318.5 2V307" stroke="#a0a0a0" stroke-width="1" stroke-dasharray="1 1"/><path d="M333.5 2V307" stroke="#dadada" stroke-width="1"/><path d="M333.5 2V307" stroke="#a0a0a0" stroke-width="1" stroke-dasharray="1 1"/><path d="M345.5 2V307" stroke="#dadada" stroke-width="1"/><path d="M345.5 2V307" stroke="#a0a0a0" stroke-width="1" stroke-dasharray="1 1"/><path d="M356.5 2V307" stroke="#dadada" stroke-width="1"/><path d="M356.5 2V307" stroke="#a0a0a0" stroke-width="1" stroke-dasharray="1 1"/><path d="M366.5 2V307" stroke="#dadada" stroke-width="1"/><path d="M366.5 2V307" stroke="#a0a0a0" stroke-width="1" stroke-dasharray="1 1"/><path d="M374.5 2V307" stroke="#dadada" stroke-width="1"/><path d="M374.5 2V307" stroke="#a0a0a0" stroke-width="1" stroke-dasharray="1 1"/><path d="M430.5 2V307" stroke="#dadada" stroke-width="1"/><path d="M430.5 2V307" stroke="#a0a0a0" stroke-width="1" stroke-dasharray="1 1"/><path d="M462.5 2V307" stroke="#dadada" stroke-width="1"/><path d="M462.5 2V307" stroke="#a0a0a0" stroke-width="1" stroke-dasharray="1 1"/><path d="M485.5 2V307" stroke="#dadada" stroke-width="1"/><path d="M485.5 2V307" stroke="#a0a0a0" stroke-width="1" stroke-dasharray="1 1"/><path d="M503.5 2V307" stroke="#dadada" stroke-width="1"/><path d="M503.5 2V307" stroke="#a0a0a0" stroke-width="1" stroke-dasharray="1 1"/><path d="M518.5 2V307" stroke="#dadada" stroke-width="1"/><path d="M518.5 2V307" stroke="#a0a0a0" stroke-width="1" stroke-dasharray="1 1"/><path d="M2 10.5H525" stroke="#d8d8d8" stroke-width="1"/><path d="M2 10.5H525" stroke="#a0a0a0" stroke-width="1" stroke-dasharray="1 2"/><path d="M2 83.5H525" stroke="#d8d8d8" stroke-width="1"/><path d="M2 83.5H525" stroke="#a0a0a0" stroke-width="1" stroke-dasharray="1 2"/><path d="M2 156.5H525" stroke="#d8d8d8" stroke-width="1"/><path d="M2 156.5H525" stroke="#a0a0a0" stroke-width="1" stroke-dasharray="1 2"/><path d="M2 229.5H525" stroke="#d8d8d8" stroke-width="1"/><path d="M2 229.5H525" stroke="#a0a0a0" stroke-width="1" stroke-dasharray="1 2"/><path d="M2 302.5H525" stroke="#d8d8d8" stroke-width="1"/><path d="M2 302.5H525" stroke="#a0a0a0" stroke-width="1" stroke-dasharray="1 2"/><polyline points="5.8,256.5 23.7,257.6 43.5,290.4 61.4,259.5 79.3,262.9 97.8,232.2 116.9,256.2 134.8,223.3 153.4,244.4 172.5,236.0 190.4,232.8 208.3,230.1 228.1,229.3 246.0,224.1 263.9,226.2 282.4,221.7 301.5,220.3 319.4,211.5 338.0,210.7 357.1,209.4 375.0,210.4 392.9,210.1 412.7,216.3 430.6,208.6 448.5,217.2 467.0,240.0 486.1,253.4 504.0,49.0 522.6,287.9" fill="none" stroke="#ff0000" stroke-width="2.6" stroke-linejoin="miter" stroke-miterlimit="4"/><rect x="1" y="1" width="525" height="307" fill="none" stroke="#000" stroke-width="2"/></svg>
<div style="position:absolute;left:355.47px;top:643.39px;font-family:&quot;Liberation Sans&quot;,sans-serif;font-size:11px;line-height:11px;font-weight:400;color:#111;white-space:pre;">15.00</div>
<div style="position:absolute;left:355.47px;top:716.39px;font-family:&quot;Liberation Sans&quot;,sans-serif;font-size:11px;line-height:11px;font-weight:400;color:#111;white-space:pre;">10.00</div>
<div style="position:absolute;left:361.58px;top:789.39px;font-family:&quot;Liberation Sans&quot;,sans-serif;font-size:11px;line-height:11px;font-weight:400;color:#111;white-space:pre;">5.00</div>
<div style="position:absolute;left:367.70px;top:862.39px;font-family:&quot;Liberation Sans&quot;,sans-serif;font-size:11px;line-height:11px;font-weight:400;color:#111;white-space:pre;">0.0</div>
<div style="position:absolute;left:355.42px;top:935.39px;font-family:&quot;Liberation Sans&quot;,sans-serif;font-size:11px;line-height:11px;font-weight:400;color:#111;white-space:pre;">-5.00</div>
<div style="position:absolute;left:390.80px;top:955.59px;font-family:&quot;Liberation Sans&quot;,sans-serif;font-size:11px;line-height:11px;font-weight:400;color:#111;white-space:pre;letter-spacing:-0.355px;">10.0</div>
<div style="position:absolute;left:575.70px;top:955.59px;font-family:&quot;Liberation Sans&quot;,sans-serif;font-size:11px;line-height:11px;font-weight:400;color:#111;white-space:pre;letter-spacing:-0.106px;">100.0</div>
<div style="position:absolute;left:759.30px;top:955.59px;font-family:&quot;Liberation Sans&quot;,sans-serif;font-size:11px;line-height:11px;font-weight:400;color:#111;white-space:pre;letter-spacing:-0.026px;">1000.0</div>
<div style="position:absolute;left:588.70px;top:966.14px;font-family:&quot;Liberation Sans&quot;,sans-serif;font-size:12px;line-height:12px;font-weight:400;color:#111;white-space:pre;letter-spacing:0.066px;">Frequency, Hz</div>
<div style="position:absolute;left:957px;top:135px;width:963px;height:882px;background:#fdfdfd;border-left:1px solid #a8a8a8;border-top:1px solid #a8a8a8;box-sizing:border-box"></div>
<div style="position:absolute;left:957px;top:1016px;width:963px;height:1px;background:#a8a8a8"></div>
<div style="position:absolute;left:957px;top:115px;width:133px;height:21px;background:#fdfdfd;border:1px solid #a8a8a8;border-bottom:none;box-sizing:border-box"></div>
<div style="position:absolute;left:963.00px;top:119.84px;font-family:&quot;Liberation Sans&quot;,sans-serif;font-size:12px;line-height:12px;font-weight:400;color:#1b1b1b;white-space:pre;letter-spacing:-0.111px;">Current measurements</div>
<svg style="position:absolute;left:1906px;top:119px" width="12" height="12" viewBox="0 0 12 12"><path d="M1 2h10" stroke="#222" stroke-width="1.5"/><path d="M1 5h10l-5 5z" fill="#222"/></svg>
<div style="position:absolute;left:975.50px;top:156.14px;font-family:&quot;Liberation Sans&quot;,sans-serif;font-size:12px;line-height:12px;font-weight:400;color:#1b1b1b;white-space:pre;letter-spacing:-0.279px;">Reference sensor signal</div>
<div style="position:absolute;left:975.50px;top:186.84px;font-family:&quot;Liberation Sans&quot;,sans-serif;font-size:12px;line-height:12px;font-weight:400;color:#1b1b1b;white-space:pre;letter-spacing:-0.157px;">Sensor under check signal</div>
<div style="position:absolute;left:1123px;top:148px;width:100px;height:26px;background:#000"></div>
<div style="position:absolute;left:1181.70px;top:151.73px;font-family:&quot;Liberation Sans&quot;,sans-serif;font-size:16.5px;line-height:16.5px;font-weight:700;color:#10f010;white-space:pre;transform:scaleX(1.1051);transform-origin:0 0;-webkit-text-stroke:0.35px #10f010">1.00</div>
<div style="position:absolute;left:1123px;top:179px;width:100px;height:26px;background:#000"></div>
<div style="position:absolute;left:1181.20px;top:182.73px;font-family:&quot;Liberation Sans&quot;,sans-serif;font-size:16.5px;line-height:16.5px;font-weight:700;color:#10f010;white-space:pre;transform:scaleX(1.1206);transform-origin:0 0;-webkit-text-stroke:0.35px #10f010">0.01</div>
<div style="position:absolute;left:1228px;top:148px;width:50px;height:26px;background:#e9e9e9;border:1px solid #acacac;box-sizing:border-box"></div>
<div style="position:absolute;left:1233.00px;top:155.14px;font-family:&quot;Liberation Sans&quot;,sans-serif;font-size:12px;line-height:12px;font-weight:400;color:#1b1b1b;white-space:pre;">g</div>
<svg style="position:absolute;left:1265px;top:158.0px" width="8" height="6" viewBox="0 0 8 6"><path d="M1 1l3 3 3-3" stroke="#555" fill="none" stroke-width="1.2"/></svg>
<div style="position:absolute;left:1281px;top:148px;width:102px;height:26px;background:#e9e9e9;border:1px solid #acacac;box-sizing:border-box"></div>
<div style="position:absolute;left:1286.00px;top:155.14px;font-family:&quot;Liberation Sans&quot;,sans-serif;font-size:12px;line-height:12px;font-weight:400;color:#1b1b1b;white-space:pre;">RMS</div>
<svg style="position:absolute;left:1370px;top:158.0px" width="8" height="6" viewBox="0 0 8 6"><path d="M1 1l3 3 3-3" stroke="#555" fill="none" stroke-width="1.2"/></svg>
<div style="position:absolute;left:1233.00px;top:186.84px;font-family:&quot;Liberation Sans&quot;,sans-serif;font-size:12px;line-height:12px;font-weight:400;color:#1b1b1b;white-space:pre;letter-spacing:-0.571px;">V (RMS)</div>
<div style="position:absolute;left:1411.40px;top:155.84px;font-family:&quot;Liberation Sans&quot;,sans-serif;font-size:12px;line-height:12px;font-weight:400;color:#1b1b1b;white-space:pre;letter-spacing:-0.037px;">Uout.</div>
<div style="position:absolute;left:1411.40px;top:187.04px;font-family:&quot;Liberation Sans&quot;,sans-serif;font-size:12px;line-height:12px;font-weight:400;color:#1b1b1b;white-space:pre;letter-spacing:-0.245px;">Frequency</div>
<div style="position:absolute;left:1475px;top:148px;width:100px;height:26px;background:#000"></div>
<div style="position:absolute;left:1532.20px;top:151.73px;font-family:&quot;Liberation Sans&quot;,sans-serif;font-size:16.5px;line-height:16.5px;font-weight:700;color:#10f010;white-space:pre;transform:scaleX(1.1518);transform-origin:0 0;-webkit-text-stroke:0.35px #10f010">0.47</div>
<div style="position:absolute;left:1475px;top:179px;width:100px;height:26px;background:#000"></div>
<div style="position:absolute;left:1502.20px;top:182.73px;font-family:&quot;Liberation Sans&quot;,sans-serif;font-size:16.5px;line-height:16.5px;font-weight:700;color:#10f010;white-space:pre;transform:scaleX(1.1231);transform-origin:0 0;-webkit-text-stroke:0.35px #10f010">1000.00</div>
<div style="position:absolute;left:1585.60px;top:155.84px;font-family:&quot;Liberation Sans&quot;,sans-serif;font-size:12px;line-height:12px;font-weight:400;color:#1b1b1b;white-space:pre;letter-spacing:-0.571px;">V (RMS)</div>
<div style="position:absolute;left:1585.60px;top:187.04px;font-family:&quot;Liberation Sans&quot;,sans-serif;font-size:12px;line-height:12px;font-weight:400;color:#1b1b1b;white-space:pre;letter-spacing:-0.586px;">Hz</div>
<svg style="position:absolute;left:970px;top:225px" width="939" height="200" viewBox="0 0 939 200"><rect x="0" y="0" width="939" height="200" fill="#353f34"/><path d="M93.5 1V199" stroke="#5d8a5c" stroke-width="1"/><path d="M187.5 1V199" stroke="#5d8a5c" stroke-width="1"/><path d="M281.5 1V199" stroke="#5d8a5c" stroke-width="1"/><path d="M375.5 1V199" stroke="#5d8a5c" stroke-width="1"/><path d="M469.5 1V199" stroke="#5d8a5c" stroke-width="1"/><path d="M563.5 1V199" stroke="#5d8a5c" stroke-width="1"/><path d="M657.5 1V199" stroke="#5d8a5c" stroke-width="1"/><path d="M751.5 1V199" stroke="#5d8a5c" stroke-width="1"/><path d="M845.5 1V199" stroke="#5d8a5c" stroke-width="1"/><path d="M1 25.5H938" stroke="#5d8a5c" stroke-width="1"/><path d="M1 50.5H938" stroke="#5d8a5c" stroke-width="1"/><path d="M1 75.5H938" stroke="#5d8a5c" stroke-width="1"/><path d="M1 100.5H938" stroke="#5d8a5c" stroke-width="1"/><path d="M1 125.5H938" stroke="#5d8a5c" stroke-width="1"/><path d="M1 150.5H938" stroke="#5d8a5c" stroke-width="1"/><path d="M1 175.5H938" stroke="#5d8a5c" stroke-width="1"/><polyline points="0.0,99.83 0.5,98.67 1.0,97.50 1.5,96.33 2.0,95.17 2.5,94.01 3.0,92.84 3.5,91.68 4.0,90.53 4.5,89.37 5.0,88.22 5.5,87.07 6.0,85.92 6.5,84.78 7.0,83.64 7.5,82.51 8.0,81.38 8.5,80.25 9.0,79.14 9.5,78.02 10.0,76.92 10.5,75.81 11.0,74.72 11.5,73.63 12.0,72.55 12.5,71.48 13.0,70.41 13.5,69.36 14.0,68.31 14.5,67.27 15.0,66.23 15.5,65.21 16.0,64.20 16.5,63.19 17.0,62.20 17.5,61.22 18.0,60.25 18.5,59.28 19.0,58.33 19.5,57.39 20.0,56.47 20.5,55.55 21.0,54.65 21.5,53.75 22.0,52.88 22.5,52.01 23.0,51.16 23.5,50.32 24.0,49.49 24.5,48.68 25.0,47.88 25.5,47.10 26.0,46.33 26.5,45.57 27.0,44.83 27.5,44.10 28.0,43.39 28.5,42.70 29.0,42.02 29.5,41.36 30.0,40.71 30.5,40.08 31.0,39.46 31.5,38.87 32.0,38.28 32.5,37.72 33.0,37.17 33.5,36.64 34.0,36.13 34.5,35.63 35.0,35.15 35.5,34.69 36.0,34.25 36.5,33.83 37.0,33.42 37.5,33.03 38.0,32.66 38.5,32.31 39.0,31.97 39.5,31.66 40.0,31.36 40.5,31.09 41.0,30.83 41.5,30.59 42.0,30.37 42.5,30.16 43.0,29.98 43.5,29.82 44.0,29.67 44.5,29.55 45.0,29.44 45.5,29.35 46.0,29.29 46.5,29.24 47.0,29.21 47.5,29.20 48.0,29.21 48.5,29.24 49.0,29.29 49.5,29.35 50.0,29.44 50.5,29.55 51.0,29.67 51.5,29.82 52.0,29.98 52.5,30.16 53.0,30.37 53.5,30.59 54.0,30.83 54.5,31.09 55.0,31.36 55.5,31.66 56.0,31.97 56.5,32.31 57.0,32.66 57.5,33.03 58.0,33.42 58.5,33.83 59.0,34.25 59.5,34.69 60.0,35.15 60.5,35.63 61.0,36.13 61.5,36.64 62.0,37.17 62.5,37.72 63.0,38.28 63.5,38.87 64.0,39.46 64.5,40.08 65.0,40.71 65.5,41.36 66.0,42.02 66.5,42.70 67.0,43.39 67.5,44.10 68.0,44.83 68.5,45.57 69.0,46.33 69.5,47.10 70.0,47.88 70.5,48.68 71.0,49.49 71.5,50.32 72.0,51.16 72.5,52.01 73.0,52.88 73.5,53.75 74.0,54.65 74.5,55.55 75.0,56.47 75.5,57.39 76.0,58.33 76.5,59.28 77.0,60.25 77.5,61.22 78.0,62.20 78.5,63.19 79.0,64.20 79.5,65.21 80.0,66.23 80.5,67.27 81.0,68.31 81.5,69.36 82.0,70.41 82.5,71.48 83.0,72.55 83.5,73.63 84.0,74.72 84.5,75.81 85.0,76.92 85.5,78.02 86.0,79.14 86.5,80.25 87.0,81.38 87.5,82.51 88.0,83.64 88.5,84.78 89.0,85.92 89.5,87.07 90.0,88.22 90.5,89.37 91.0,90.53 91.5,91.68 92.0,92.84 92.5,94.01 93.0,95.17 93.5,96.33 94.0,97.50 94.5,98.67 95.0,99.83 95.5,101.00 96.0,102.17 96.5,103.33 97.0,104.50 97.5,105.66 98.0,106.82 98.5,107.98 99.0,109.14 99.5,110.29 100.0,111.44 100.5,112.59 101.0,113.73 101.5,114.88 102.0,116.01 102.5,117.14 103.0,118.27 103.5,119.39 104.0,120.51 104.5,121.62 105.0,122.73 105.5,123.82 106.0,124.92 106.5,126.00 107.0,127.08 107.5,128.15 108.0,129.21 108.5,130.27 109.0,131.31 109.5,132.35 110.0,133.38 110.5,134.40 111.0,135.40 111.5,136.40 112.0,137.39 112.5,138.37 113.0,139.34 113.5,140.30 114.0,141.24 114.5,142.18 115.0,143.10 115.5,144.01 116.0,144.91 116.5,145.80 117.0,146.67 117.5,147.53 118.0,148.38 118.5,149.22 119.0,150.04 119.5,150.84 120.0,151.64 120.5,152.41 121.0,153.18 121.5,153.93 122.0,154.66 122.5,155.38 123.0,156.08 123.5,156.77 124.0,157.45 124.5,158.10 125.0,158.74 125.5,159.37 126.0,159.98 126.5,160.57 127.0,161.14 127.5,161.70 128.0,162.24 128.5,162.77 129.0,163.27 129.5,163.76 130.0,164.23 130.5,164.69 131.0,165.12 131.5,165.54 132.0,165.94 132.5,166.32 133.0,166.68 133.5,167.03 134.0,167.35 134.5,167.66 135.0,167.95 135.5,168.22 136.0,168.47 136.5,168.70 137.0,168.92 137.5,169.11 138.0,169.29 138.5,169.44 139.0,169.58 139.5,169.70 140.0,169.80 140.5,169.87 141.0,169.93 141.5,169.98 142.0,170.00 142.5,170.00 143.0,169.98 143.5,169.94 144.0,169.89 144.5,169.81 145.0,169.72 145.5,169.60 146.0,169.47 146.5,169.32 147.0,169.15 147.5,168.96 148.0,168.75 148.5,168.52 149.0,168.27 149.5,168.01 150.0,167.72 150.5,167.42 151.0,167.09 151.5,166.75 152.0,166.39 152.5,166.02 153.0,165.62 153.5,165.21 154.0,164.77 154.5,164.32 155.0,163.86 155.5,163.37 156.0,162.87 156.5,162.35 157.0,161.81 157.5,161.26 158.0,160.68 158.5,160.10 159.0,159.49 159.5,158.87 160.0,158.23 160.5,157.58 161.0,156.91 161.5,156.22 162.0,155.52 162.5,154.81 163.0,154.08 163.5,153.33 164.0,152.57 164.5,151.79 165.0,151.00 165.5,150.20 166.0,149.38 166.5,148.55 167.0,147.70 167.5,146.85 168.0,145.97 168.5,145.09 169.0,144.19 169.5,143.28 170.0,142.36 170.5,141.43 171.0,140.49 171.5,139.53 172.0,138.57 172.5,137.59 173.0,136.60 173.5,135.61 174.0,134.60 174.5,133.58 175.0,132.55 175.5,131.52 176.0,130.48 176.5,129.42 177.0,128.36 177.5,127.29 178.0,126.22 178.5,125.13 179.0,124.04 179.5,122.95 180.0,121.84 180.5,120.73 181.0,119.62 181.5,118.50 182.0,117.37 182.5,116.24 183.0,115.10 183.5,113.96 184.0,112.82 184.5,111.67 185.0,110.52 185.5,109.37 186.0,108.21 186.5,107.05 187.0,105.89 187.5,104.73 188.0,103.56 188.5,102.40 189.0,101.23 189.5,100.07 190.0,98.90 190.5,97.73 191.0,96.57 191.5,95.40 192.0,94.24 192.5,93.08 193.0,91.92 193.5,90.76 194.0,89.60 194.5,88.45 195.0,87.30 195.5,86.15 196.0,85.01 196.5,83.87 197.0,82.73 197.5,81.60 198.0,80.48 198.5,79.36 199.0,78.24 199.5,77.14 200.0,76.03 200.5,74.94 201.0,73.85 201.5,72.77 202.0,71.69 202.5,70.63 203.0,69.57 203.5,68.52 204.0,67.47 204.5,66.44 205.0,65.42 205.5,64.40 206.0,63.39 206.5,62.40 207.0,61.41 207.5,60.44 208.0,59.48 208.5,58.52 209.0,57.58 209.5,56.65 210.0,55.73 210.5,54.83 211.0,53.93 211.5,53.05 212.0,52.18 212.5,51.33 213.0,50.48 213.5,49.65 214.0,48.84 214.5,48.04 215.0,47.25 215.5,46.48 216.0,45.72 216.5,44.98 217.0,44.25 217.5,43.54 218.0,42.84 218.5,42.16 219.0,41.49 219.5,40.84 220.0,40.20 220.5,39.59 221.0,38.98 221.5,38.40 222.0,37.83 222.5,37.28 223.0,36.75 223.5,36.23 224.0,35.73 224.5,35.25 225.0,34.78 225.5,34.34 226.0,33.91 226.5,33.50 227.0,33.11 227.5,32.73 228.0,32.38 228.5,32.04 229.0,31.72 229.5,31.42 230.0,31.14 230.5,30.88 231.0,30.63 231.5,30.41 232.0,30.20 232.5,30.02 233.0,29.85 233.5,29.70 234.0,29.57 234.5,29.46 235.0,29.37 235.5,29.30 236.0,29.25 236.5,29.21 237.0,29.20 237.5,29.21 238.0,29.23 238.5,29.28 239.0,29.34 239.5,29.42 240.0,29.52 240.5,29.65 241.0,29.79 241.5,29.95 242.0,30.13 242.5,30.32 243.0,30.54 243.5,30.78 244.0,31.03 244.5,31.31 245.0,31.60 245.5,31.91 246.0,32.24 246.5,32.59 247.0,32.95 247.5,33.34 248.0,33.74 248.5,34.16 249.0,34.60 249.5,35.06 250.0,35.54 250.5,36.03 251.0,36.54 251.5,37.06 252.0,37.61 252.5,38.17 253.0,38.75 253.5,39.34 254.0,39.96 254.5,40.58 255.0,41.23 255.5,41.89 256.0,42.56 256.5,43.25 257.0,43.96 257.5,44.68 258.0,45.42 258.5,46.17 259.0,46.94 259.5,47.72 260.0,48.52 260.5,49.33 261.0,50.15 261.5,50.99 262.0,51.84 262.5,52.70 263.0,53.58 263.5,54.47 264.0,55.37 264.5,56.28 265.0,57.21 265.5,58.14 266.0,59.09 266.5,60.05 267.0,61.02 267.5,62.00 268.0,63.00 268.5,64.00 269.0,65.01 269.5,66.03 270.0,67.06 270.5,68.10 271.0,69.14 271.5,70.20 272.0,71.26 272.5,72.34 273.0,73.42 273.5,74.50 274.0,75.59 274.5,76.69 275.0,77.80 275.5,78.91 276.0,80.03 276.5,81.15 277.0,82.28 277.5,83.42 278.0,84.55 278.5,85.69 279.0,86.84 279.5,87.99 280.0,89.14 280.5,90.30 281.0,91.45 281.5,92.61 282.0,93.77 282.5,94.94 283.0,96.10 283.5,97.27 284.0,98.43 284.5,99.60 285.0,100.77 285.5,101.93 286.0,103.10 286.5,104.26 287.0,105.43 287.5,106.59 288.0,107.75 288.5,108.90 289.0,110.06 289.5,111.21 290.0,112.36 290.5,113.51 291.0,114.65 291.5,115.78 292.0,116.92 292.5,118.05 293.0,119.17 293.5,120.29 294.0,121.40 294.5,122.51 295.0,123.61 295.5,124.70 296.0,125.78 296.5,126.86 297.0,127.94 297.5,129.00 298.0,130.06 298.5,131.10 299.0,132.14 299.5,133.17 300.0,134.19 300.5,135.20 301.0,136.20 301.5,137.20 302.0,138.18 302.5,139.15 303.0,140.11 303.5,141.06 304.0,141.99 304.5,142.92 305.0,143.83 305.5,144.73 306.0,145.62 306.5,146.50 307.0,147.36 307.5,148.21 308.0,149.05 308.5,149.87 309.0,150.68 309.5,151.48 310.0,152.26 310.5,153.03 311.0,153.78 311.5,154.52 312.0,155.24 312.5,155.95 313.0,156.64 313.5,157.31 314.0,157.97 314.5,158.62 315.0,159.24 315.5,159.86 316.0,160.45 316.5,161.03 317.0,161.59 317.5,162.14 318.0,162.66 318.5,163.17 319.0,163.66 319.5,164.14 320.0,164.60 320.5,165.04 321.0,165.46 321.5,165.86 322.0,166.25 322.5,166.61 323.0,166.96 323.5,167.29 324.0,167.60 324.5,167.89 325.0,168.17 325.5,168.42 326.0,168.66 326.5,168.88 327.0,169.07 327.5,169.25 328.0,169.41 328.5,169.55 329.0,169.68 329.5,169.78 330.0,169.86 330.5,169.92 331.0,169.97 331.5,169.99 332.0,170.00 332.5,169.99 333.0,169.95 333.5,169.90 334.0,169.83 334.5,169.74 335.0,169.63 335.5,169.50 336.0,169.35 336.5,169.18 337.0,169.00 337.5,168.79 338.0,168.57 338.5,168.32 339.0,168.06 339.5,167.78 340.0,167.48 340.5,167.16 341.0,166.82 341.5,166.47 342.0,166.09 342.5,165.70 343.0,165.29 343.5,164.86 344.0,164.42 344.5,163.95 345.0,163.47 345.5,162.97 346.0,162.45 346.5,161.92 347.0,161.37 347.5,160.80 348.0,160.22 348.5,159.61 349.0,159.00 349.5,158.36 350.0,157.71 350.5,157.04 351.0,156.36 351.5,155.66 352.0,154.95 352.5,154.22 353.0,153.48 353.5,152.72 354.0,151.95 354.5,151.16 355.0,150.36 355.5,149.55 356.0,148.72 356.5,147.87 357.0,147.02 357.5,146.15 358.0,145.27 358.5,144.37 359.0,143.47 359.5,142.55 360.0,141.62 360.5,140.68 361.0,139.72 361.5,138.76 362.0,137.79 362.5,136.80 363.0,135.81 363.5,134.80 364.0,133.78 364.5,132.76 365.0,131.73 365.5,130.68 366.0,129.63 366.5,128.57 367.0,127.51 367.5,126.43 368.0,125.35 368.5,124.26 369.0,123.17 369.5,122.06 370.0,120.96 370.5,119.84 371.0,118.72 371.5,117.60 372.0,116.47 372.5,115.33 373.0,114.19 373.5,113.05 374.0,111.90 374.5,110.75 375.0,109.60 375.5,108.44 376.0,107.28 376.5,106.12 377.0,104.96 377.5,103.80 378.0,102.63 378.5,101.47 379.0,100.30 379.5,99.13 380.0,97.97 380.5,96.80 381.0,95.64 381.5,94.47 382.0,93.31 382.5,92.15 383.0,90.99 383.5,89.83 384.0,88.68 384.5,87.53 385.0,86.38 385.5,85.24 386.0,84.10 386.5,82.96 387.0,81.83 387.5,80.70 388.0,79.58 388.5,78.47 389.0,77.36 389.5,76.25 390.0,75.16 390.5,74.07 391.0,72.98 391.5,71.91 392.0,70.84 392.5,69.78 393.0,68.72 393.5,67.68 394.0,66.65 394.5,65.62 395.0,64.60 395.5,63.59 396.0,62.60 396.5,61.61 397.0,60.63 397.5,59.67 398.0,58.71 398.5,57.77 399.0,56.84 399.5,55.92 400.0,55.01 400.5,54.11 401.0,53.23 401.5,52.35 402.0,51.50 402.5,50.65 403.0,49.82 403.5,49.00 404.0,48.20 404.5,47.41 405.0,46.63 405.5,45.87 406.0,45.12 406.5,44.39 407.0,43.68 407.5,42.98 408.0,42.29 408.5,41.62 409.0,40.97 409.5,40.33 410.0,39.71 410.5,39.10 411.0,38.52 411.5,37.94 412.0,37.39 412.5,36.85 413.0,36.33 413.5,35.83 414.0,35.34 414.5,34.88 415.0,34.43 415.5,33.99 416.0,33.58 416.5,33.18 417.0,32.81 417.5,32.45 418.0,32.11 418.5,31.78 419.0,31.48 419.5,31.19 420.0,30.93 420.5,30.68 421.0,30.45 421.5,30.24 422.0,30.05 422.5,29.88 423.0,29.73 423.5,29.60 424.0,29.48 424.5,29.39 425.0,29.31 425.5,29.26 426.0,29.22 426.5,29.20 427.0,29.20 427.5,29.22 428.0,29.27 428.5,29.33 429.0,29.40 429.5,29.50 430.0,29.62 430.5,29.76 431.0,29.91 431.5,30.09 432.0,30.28 432.5,30.50 433.0,30.73 433.5,30.98 434.0,31.25 434.5,31.54 435.0,31.85 435.5,32.17 436.0,32.52 436.5,32.88 437.0,33.26 437.5,33.66 438.0,34.08 438.5,34.51 439.0,34.97 439.5,35.44 440.0,35.93 440.5,36.43 441.0,36.96 441.5,37.50 442.0,38.06 442.5,38.63 443.0,39.22 443.5,39.83 444.0,40.46 444.5,41.10 445.0,41.75 445.5,42.43 446.0,43.12 446.5,43.82 447.0,44.54 447.5,45.27 448.0,46.02 448.5,46.79 449.0,47.56 449.5,48.36 450.0,49.16 450.5,49.98 451.0,50.82 451.5,51.67 452.0,52.53 452.5,53.40 453.0,54.29 453.5,55.19 454.0,56.10 454.5,57.02 455.0,57.96 455.5,58.90 456.0,59.86 456.5,60.83 457.0,61.81 457.5,62.80 458.0,63.80 458.5,64.80 459.0,65.82 459.5,66.85 460.0,67.89 460.5,68.93 461.0,69.99 461.5,71.05 462.0,72.12 462.5,73.20 463.0,74.28 463.5,75.38 464.0,76.47 464.5,77.58 465.0,78.69 465.5,79.81 466.0,80.93 466.5,82.06 467.0,83.19 467.5,84.32 468.0,85.47 468.5,86.61 469.0,87.76 469.5,88.91 470.0,90.06 470.5,91.22 471.0,92.38 471.5,93.54 472.0,94.70 472.5,95.87 473.0,97.03 473.5,98.20 474.0,99.37 474.5,100.53 475.0,101.70 475.5,102.87 476.0,104.03 476.5,105.19 477.0,106.36 477.5,107.52 478.0,108.67 478.5,109.83 479.0,110.98 479.5,112.13 480.0,113.28 480.5,114.42 481.0,115.56 481.5,116.69 482.0,117.82 482.5,118.95 483.0,120.06 483.5,121.18 484.0,122.28 484.5,123.39 485.0,124.48 485.5,125.57 486.0,126.65 486.5,127.72 487.0,128.79 487.5,129.84 488.0,130.89 488.5,131.93 489.0,132.97 489.5,133.99 490.0,135.00 490.5,136.01 491.0,137.00 491.5,137.98 492.0,138.95 492.5,139.92 493.0,140.87 493.5,141.81 494.0,142.73 494.5,143.65 495.0,144.55 495.5,145.45 496.0,146.32 496.5,147.19 497.0,148.04 497.5,148.88 498.0,149.71 498.5,150.52 499.0,151.32 499.5,152.10 500.0,152.87 500.5,153.63 501.0,154.37 501.5,155.10 502.0,155.81 502.5,156.50 503.0,157.18 503.5,157.84 504.0,158.49 504.5,159.12 505.0,159.74 505.5,160.33 506.0,160.92 506.5,161.48 507.0,162.03 507.5,162.56 508.0,163.07 508.5,163.57 509.0,164.05 509.5,164.51 510.0,164.95 510.5,165.37 511.0,165.78 511.5,166.17 512.0,166.54 512.5,166.89 513.0,167.23 513.5,167.54 514.0,167.84 514.5,168.11 515.0,168.37 515.5,168.61 516.0,168.83 516.5,169.04 517.0,169.22 517.5,169.38 518.0,169.53 518.5,169.65 519.0,169.76 519.5,169.85 520.0,169.91 520.5,169.96 521.0,169.99 521.5,170.00 522.0,169.99 522.5,169.96 523.0,169.91 523.5,169.85 524.0,169.76 524.5,169.65 525.0,169.53 525.5,169.38 526.0,169.22 526.5,169.04 527.0,168.83 527.5,168.61 528.0,168.37 528.5,168.11 529.0,167.84 529.5,167.54 530.0,167.23 530.5,166.89 531.0,166.54 531.5,166.17 532.0,165.78 532.5,165.37 533.0,164.95 533.5,164.51 534.0,164.05 534.5,163.57 535.0,163.07 535.5,162.56 536.0,162.03 536.5,161.48 537.0,160.92 537.5,160.33 538.0,159.74 538.5,159.12 539.0,158.49 539.5,157.84 540.0,157.18 540.5,156.50 541.0,155.81 541.5,155.10 542.0,154.37 542.5,153.63 543.0,152.87 543.5,152.10 544.0,151.32 544.5,150.52 545.0,149.71 545.5,148.88 546.0,148.04 546.5,147.19 547.0,146.32 547.5,145.45 548.0,144.55 548.5,143.65 549.0,142.73 549.5,141.81 550.0,140.87 550.5,139.92 551.0,138.95 551.5,137.98 552.0,137.00 552.5,136.01 553.0,135.00 553.5,133.99 554.0,132.97 554.5,131.93 555.0,130.89 555.5,129.84 556.0,128.79 556.5,127.72 557.0,126.65 557.5,125.57 558.0,124.48 558.5,123.39 559.0,122.28 559.5,121.18 560.0,120.06 560.5,118.95 561.0,117.82 561.5,116.69 562.0,115.56 562.5,114.42 563.0,113.28 563.5,112.13 564.0,110.98 564.5,109.83 565.0,108.67 565.5,107.52 566.0,106.36 566.5,105.19 567.0,104.03 567.5,102.87 568.0,101.70 568.5,100.53 569.0,99.37 569.5,98.20 570.0,97.03 570.5,95.87 571.0,94.70 571.5,93.54 572.0,92.38 572.5,91.22 573.0,90.06 573.5,88.91 574.0,87.76 574.5,86.61 575.0,85.47 575.5,84.32 576.0,83.19 576.5,82.06 577.0,80.93 577.5,79.81 578.0,78.69 578.5,77.58 579.0,76.47 579.5,75.38 580.0,74.28 580.5,73.20 581.0,72.12 581.5,71.05 582.0,69.99 582.5,68.93 583.0,67.89 583.5,66.85 584.0,65.82 584.5,64.80 585.0,63.80 585.5,62.80 586.0,61.81 586.5,60.83 587.0,59.86 587.5,58.90 588.0,57.96 588.5,57.02 589.0,56.10 589.5,55.19 590.0,54.29 590.5,53.40 591.0,52.53 591.5,51.67 592.0,50.82 592.5,49.98 593.0,49.16 593.5,48.36 594.0,47.56 594.5,46.79 595.0,46.02 595.5,45.27 596.0,44.54 596.5,43.82 597.0,43.12 597.5,42.43 598.0,41.75 598.5,41.10 599.0,40.46 599.5,39.83 600.0,39.22 600.5,38.63 601.0,38.06 601.5,37.50 602.0,36.96 602.5,36.43 603.0,35.93 603.5,35.44 604.0,34.97 604.5,34.51 605.0,34.08 605.5,33.66 606.0,33.26 606.5,32.88 607.0,32.52 607.5,32.17 608.0,31.85 608.5,31.54 609.0,31.25 609.5,30.98 610.0,30.73 610.5,30.50 611.0,30.28 611.5,30.09 612.0,29.91 612.5,29.76 613.0,29.62 613.5,29.50 614.0,29.40 614.5,29.33 615.0,29.27 615.5,29.22 616.0,29.20 616.5,29.20 617.0,29.22 617.5,29.26 618.0,29.31 618.5,29.39 619.0,29.48 619.5,29.60 620.0,29.73 620.5,29.88 621.0,30.05 621.5,30.24 622.0,30.45 622.5,30.68 623.0,30.93 623.5,31.19 624.0,31.48 624.5,31.78 625.0,32.11 625.5,32.45 626.0,32.81 626.5,33.18 627.0,33.58 627.5,33.99 628.0,34.43 628.5,34.88 629.0,35.34 629.5,35.83 630.0,36.33 630.5,36.85 631.0,37.39 631.5,37.94 632.0,38.52 632.5,39.10 633.0,39.71 633.5,40.33 634.0,40.97 634.5,41.62 635.0,42.29 635.5,42.98 636.0,43.68 636.5,44.39 637.0,45.12 637.5,45.87 638.0,46.63 638.5,47.41 639.0,48.20 639.5,49.00 640.0,49.82 640.5,50.65 641.0,51.50 641.5,52.35 642.0,53.23 642.5,54.11 643.0,55.01 643.5,55.92 644.0,56.84 644.5,57.77 645.0,58.71 645.5,59.67 646.0,60.63 646.5,61.61 647.0,62.60 647.5,63.59 648.0,64.60 648.5,65.62 649.0,66.65 649.5,67.68 650.0,68.72 650.5,69.78 651.0,70.84 651.5,71.91 652.0,72.98 652.5,74.07 653.0,75.16 653.5,76.25 654.0,77.36 654.5,78.47 655.0,79.58 655.5,80.70 656.0,81.83 656.5,82.96 657.0,84.10 657.5,85.24 658.0,86.38 658.5,87.53 659.0,88.68 659.5,89.83 660.0,90.99 660.5,92.15 661.0,93.31 661.5,94.47 662.0,95.64 662.5,96.80 663.0,97.97 663.5,99.13 664.0,100.30 664.5,101.47 665.0,102.63 665.5,103.80 666.0,104.96 666.5,106.12 667.0,107.28 667.5,108.44 668.0,109.60 668.5,110.75 669.0,111.90 669.5,113.05 670.0,114.19 670.5,115.33 671.0,116.47 671.5,117.60 672.0,118.72 672.5,119.84 673.0,120.96 673.5,122.06 674.0,123.17 674.5,124.26 675.0,125.35 675.5,126.43 676.0,127.51 676.5,128.57 677.0,129.63 677.5,130.68 678.0,131.73 678.5,132.76 679.0,133.78 679.5,134.80 680.0,135.81 680.5,136.80 681.0,137.79 681.5,138.76 682.0,139.72 682.5,140.68 683.0,141.62 683.5,142.55 684.0,143.47 684.5,144.37 685.0,145.27 685.5,146.15 686.0,147.02 686.5,147.87 687.0,148.72 687.5,149.55 688.0,150.36 688.5,151.16 689.0,151.95 689.5,152.72 690.0,153.48 690.5,154.22 691.0,154.95 691.5,155.66 692.0,156.36 692.5,157.04 693.0,157.71 693.5,158.36 694.0,159.00 694.5,159.61 695.0,160.22 695.5,160.80 696.0,161.37 696.5,161.92 697.0,162.45 697.5,162.97 698.0,163.47 698.5,163.95 699.0,164.42 699.5,164.86 700.0,165.29 700.5,165.70 701.0,166.09 701.5,166.47 702.0,166.82 702.5,167.16 703.0,167.48 703.5,167.78 704.0,168.06 704.5,168.32 705.0,168.57 705.5,168.79 706.0,169.00 706.5,169.18 707.0,169.35 707.5,169.50 708.0,169.63 708.5,169.74 709.0,169.83 709.5,169.90 710.0,169.95 710.5,169.99 711.0,170.00 711.5,169.99 712.0,169.97 712.5,169.92 713.0,169.86 713.5,169.78 714.0,169.68 714.5,169.55 715.0,169.41 715.5,169.25 716.0,169.07 716.5,168.88 717.0,168.66 717.5,168.42 718.0,168.17 718.5,167.89 719.0,167.60 719.5,167.29 720.0,166.96 720.5,166.61 721.0,166.25 721.5,165.86 722.0,165.46 722.5,165.04 723.0,164.60 723.5,164.14 724.0,163.66 724.5,163.17 725.0,162.66 725.5,162.14 726.0,161.59 726.5,161.03 727.0,160.45 727.5,159.86 728.0,159.24 728.5,158.62 729.0,157.97 729.5,157.31 730.0,156.64 730.5,155.95 731.0,155.24 731.5,154.52 732.0,153.78 732.5,153.03 733.0,152.26 733.5,151.48 734.0,150.68 734.5,149.87 735.0,149.05 735.5,148.21 736.0,147.36 736.5,146.50 737.0,145.62 737.5,144.73 738.0,143.83 738.5,142.92 739.0,141.99 739.5,141.06 740.0,140.11 740.5,139.15 741.0,138.18 741.5,137.20 742.0,136.20 742.5,135.20 743.0,134.19 743.5,133.17 744.0,132.14 744.5,131.10 745.0,130.06 745.5,129.00 746.0,127.94 746.5,126.86 747.0,125.78 747.5,124.70 748.0,123.61 748.5,122.51 749.0,121.40 749.5,120.29 750.0,119.17 750.5,118.05 751.0,116.92 751.5,115.78 752.0,114.65 752.5,113.51 753.0,112.36 753.5,111.21 754.0,110.06 754.5,108.90 755.0,107.75 755.5,106.59 756.0,105.43 756.5,104.26 757.0,103.10 757.5,101.93 758.0,100.77 758.5,99.60 759.0,98.43 759.5,97.27 760.0,96.10 760.5,94.94 761.0,93.77 761.5,92.61 762.0,91.45 762.5,90.30 763.0,89.14 763.5,87.99 764.0,86.84 764.5,85.69 765.0,84.55 765.5,83.42 766.0,82.28 766.5,81.15 767.0,80.03 767.5,78.91 768.0,77.80 768.5,76.69 769.0,75.59 769.5,74.50 770.0,73.42 770.5,72.34 771.0,71.26 771.5,70.20 772.0,69.14 772.5,68.10 773.0,67.06 773.5,66.03 774.0,65.01 774.5,64.00 775.0,63.00 775.5,62.00 776.0,61.02 776.5,60.05 777.0,59.09 777.5,58.14 778.0,57.21 778.5,56.28 779.0,55.37 779.5,54.47 780.0,53.58 780.5,52.70 781.0,51.84 781.5,50.99 782.0,50.15 782.5,49.33 783.0,48.52 783.5,47.72 784.0,46.94 784.5,46.17 785.0,45.42 785.5,44.68 786.0,43.96 786.5,43.25 787.0,42.56 787.5,41.89 788.0,41.23 788.5,40.58 789.0,39.96 789.5,39.34 790.0,38.75 790.5,38.17 791.0,37.61 791.5,37.06 792.0,36.54 792.5,36.03 793.0,35.54 793.5,35.06 794.0,34.60 794.5,34.16 795.0,33.74 795.5,33.34 796.0,32.95 796.5,32.59 797.0,32.24 797.5,31.91 798.0,31.60 798.5,31.31 799.0,31.03 799.5,30.78 800.0,30.54 800.5,30.32 801.0,30.13 801.5,29.95 802.0,29.79 802.5,29.65 803.0,29.52 803.5,29.42 804.0,29.34 804.5,29.28 805.0,29.23 805.5,29.21 806.0,29.20 806.5,29.21 807.0,29.25 807.5,29.30 808.0,29.37 808.5,29.46 809.0,29.57 809.5,29.70 810.0,29.85 810.5,30.02 811.0,30.20 811.5,30.41 812.0,30.63 812.5,30.88 813.0,31.14 813.5,31.42 814.0,31.72 814.5,32.04 815.0,32.38 815.5,32.73 816.0,33.11 816.5,33.50 817.0,33.91 817.5,34.34 818.0,34.78 818.5,35.25 819.0,35.73 819.5,36.23 820.0,36.75 820.5,37.28 821.0,37.83 821.5,38.40 822.0,38.98 822.5,39.59 823.0,40.20 823.5,40.84 824.0,41.49 824.5,42.16 825.0,42.84 825.5,43.54 826.0,44.25 826.5,44.98 827.0,45.72 827.5,46.48 828.0,47.25 828.5,48.04 829.0,48.84 829.5,49.65 830.0,50.48 830.5,51.33 831.0,52.18 831.5,53.05 832.0,53.93 832.5,54.83 833.0,55.73 833.5,56.65 834.0,57.58 834.5,58.52 835.0,59.48 835.5,60.44 836.0,61.41 836.5,62.40 837.0,63.39 837.5,64.40 838.0,65.42 838.5,66.44 839.0,67.47 839.5,68.52 840.0,69.57 840.5,70.63 841.0,71.69 841.5,72.77 842.0,73.85 842.5,74.94 843.0,76.03 843.5,77.14 844.0,78.24 844.5,79.36 845.0,80.48 845.5,81.60 846.0,82.73 846.5,83.87 847.0,85.01 847.5,86.15 848.0,87.30 848.5,88.45 849.0,89.60 849.5,90.76 850.0,91.92 850.5,93.08 851.0,94.24 851.5,95.40 852.0,96.57 852.5,97.73 853.0,98.90 853.5,100.07 854.0,101.23 854.5,102.40 855.0,103.56 855.5,104.73 856.0,105.89 856.5,107.05 857.0,108.21 857.5,109.37 858.0,110.52 858.5,111.67 859.0,112.82 859.5,113.96 860.0,115.10 860.5,116.24 861.0,117.37 861.5,118.50 862.0,119.62 862.5,120.73 863.0,121.84 863.5,122.95 864.0,124.04 864.5,125.13 865.0,126.22 865.5,127.29 866.0,128.36 866.5,129.42 867.0,130.48 867.5,131.52 868.0,132.55 868.5,133.58 869.0,134.60 869.5,135.61 870.0,136.60 870.5,137.59 871.0,138.57 871.5,139.53 872.0,140.49 872.5,141.43 873.0,142.36 873.5,143.28 874.0,144.19 874.5,145.09 875.0,145.97 875.5,146.85 876.0,147.70 876.5,148.55 877.0,149.38 877.5,150.20 878.0,151.00 878.5,151.79 879.0,152.57 879.5,153.33 880.0,154.08 880.5,154.81 881.0,155.52 881.5,156.22 882.0,156.91 882.5,157.58 883.0,158.23 883.5,158.87 884.0,159.49 884.5,160.10 885.0,160.68 885.5,161.26 886.0,161.81 886.5,162.35 887.0,162.87 887.5,163.37 888.0,163.86 888.5,164.32 889.0,164.77 889.5,165.21 890.0,165.62 890.5,166.02 891.0,166.39 891.5,166.75 892.0,167.09 892.5,167.42 893.0,167.72 893.5,168.01 894.0,168.27 894.5,168.52 895.0,168.75 895.5,168.96 896.0,169.15 896.5,169.32 897.0,169.47 897.5,169.60 898.0,169.72 898.5,169.81 899.0,169.89 899.5,169.94 900.0,169.98 900.5,170.00 901.0,170.00 901.5,169.98 902.0,169.93 902.5,169.87 903.0,169.80 903.5,169.70 904.0,169.58 904.5,169.44 905.0,169.29 905.5,169.11 906.0,168.92 906.5,168.70 907.0,168.47 907.5,168.22 908.0,167.95 908.5,167.66 909.0,167.35 909.5,167.03 910.0,166.68 910.5,166.32 911.0,165.94 911.5,165.54 912.0,165.12 912.5,164.69 913.0,164.23 913.5,163.76 914.0,163.27 914.5,162.77 915.0,162.24 915.5,161.70 916.0,161.14 916.5,160.57 917.0,159.98 917.5,159.37 918.0,158.74 918.5,158.10 919.0,157.45 919.5,156.77 920.0,156.08 920.5,155.38 921.0,154.66 921.5,153.93 922.0,153.18 922.5,152.41 923.0,151.64 923.5,150.84 924.0,150.04 924.5,149.22 925.0,148.38 925.5,147.53 926.0,146.67 926.5,145.80 927.0,144.91 927.5,144.01 928.0,143.10 928.5,142.18 929.0,141.24 929.5,140.30 930.0,139.34 930.5,138.37 931.0,137.39 931.5,136.40 932.0,135.40 932.5,134.40 933.0,133.38 933.5,132.35 934.0,131.31 934.5,130.27 935.0,129.21 935.5,128.15 936.0,127.08 936.5,126.00 937.0,124.92 937.5,123.82 938.0,122.73 938.5,121.62 939.0,120.51" fill="none" stroke="#ff0000" stroke-width="1.15"/><polyline points="0.0,99.16 0.5,100.38 1.0,101.60 1.5,102.83 2.0,104.05 2.5,105.27 3.0,106.49 3.5,107.71 4.0,108.92 4.5,110.14 5.0,111.35 5.5,112.55 6.0,113.76 6.5,114.96 7.0,116.15 7.5,117.34 8.0,118.53 8.5,119.71 9.0,120.88 9.5,122.05 10.0,123.21 10.5,124.37 11.0,125.52 11.5,126.66 12.0,127.79 12.5,128.92 13.0,130.04 13.5,131.15 14.0,132.25 14.5,133.34 15.0,134.43 15.5,135.50 16.0,136.56 16.5,137.62 17.0,138.66 17.5,139.69 18.0,140.71 18.5,141.72 19.0,142.72 19.5,143.70 20.0,144.68 20.5,145.64 21.0,146.59 21.5,147.52 22.0,148.45 22.5,149.36 23.0,150.25 23.5,151.13 24.0,152.00 24.5,152.85 25.0,153.69 25.5,154.51 26.0,155.32 26.5,156.12 27.0,156.89 27.5,157.65 28.0,158.40 28.5,159.13 29.0,159.84 29.5,160.54 30.0,161.22 30.5,161.88 31.0,162.52 31.5,163.15 32.0,163.76 32.5,164.36 33.0,164.93 33.5,165.49 34.0,166.03 34.5,166.55 35.0,167.05 35.5,167.53 36.0,168.00 36.5,168.44 37.0,168.87 37.5,169.28 38.0,169.67 38.5,170.04 39.0,170.39 39.5,170.72 40.0,171.03 40.5,171.32 41.0,171.59 41.5,171.84 42.0,172.08 42.5,172.29 43.0,172.48 43.5,172.65 44.0,172.80 44.5,172.94 45.0,173.05 45.5,173.14 46.0,173.21 46.5,173.26 47.0,173.29 47.5,173.30 48.0,173.29 48.5,173.26 49.0,173.21 49.5,173.14 50.0,173.05 50.5,172.94 51.0,172.80 51.5,172.65 52.0,172.48 52.5,172.29 53.0,172.08 53.5,171.84 54.0,171.59 54.5,171.32 55.0,171.03 55.5,170.72 56.0,170.39 56.5,170.04 57.0,169.67 57.5,169.28 58.0,168.87 58.5,168.44 59.0,168.00 59.5,167.53 60.0,167.05 60.5,166.55 61.0,166.03 61.5,165.49 62.0,164.93 62.5,164.36 63.0,163.76 63.5,163.15 64.0,162.52 64.5,161.88 65.0,161.22 65.5,160.54 66.0,159.84 66.5,159.13 67.0,158.40 67.5,157.65 68.0,156.89 68.5,156.12 69.0,155.32 69.5,154.51 70.0,153.69 70.5,152.85 71.0,152.00 71.5,151.13 72.0,150.25 72.5,149.36 73.0,148.45 73.5,147.52 74.0,146.59 74.5,145.64 75.0,144.68 75.5,143.70 76.0,142.72 76.5,141.72 77.0,140.71 77.5,139.69 78.0,138.66 78.5,137.62 79.0,136.56 79.5,135.50 80.0,134.43 80.5,133.34 81.0,132.25 81.5,131.15 82.0,130.04 82.5,128.92 83.0,127.79 83.5,126.66 84.0,125.52 84.5,124.37 85.0,123.21 85.5,122.05 86.0,120.88 86.5,119.71 87.0,118.53 87.5,117.34 88.0,116.15 88.5,114.96 89.0,113.76 89.5,112.55 90.0,111.35 90.5,110.14 91.0,108.92 91.5,107.71 92.0,106.49 92.5,105.27 93.0,104.05 93.5,102.83 94.0,101.60 94.5,100.38 95.0,99.16 95.5,97.93 96.0,96.71 96.5,95.48 97.0,94.26 97.5,93.04 98.0,91.82 98.5,90.60 99.0,89.39 99.5,88.18 100.0,86.97 100.5,85.76 101.0,84.56 101.5,83.37 102.0,82.17 102.5,80.98 103.0,79.80 103.5,78.62 104.0,77.45 104.5,76.28 105.0,75.12 105.5,73.97 106.0,72.83 106.5,71.69 107.0,70.56 107.5,69.43 108.0,68.32 108.5,67.21 109.0,66.11 109.5,65.02 110.0,63.94 110.5,62.87 111.0,61.82 111.5,60.77 112.0,59.73 112.5,58.70 113.0,57.68 113.5,56.68 114.0,55.69 114.5,54.70 115.0,53.74 115.5,52.78 116.0,51.84 116.5,50.90 117.0,49.99 117.5,49.08 118.0,48.19 118.5,47.32 119.0,46.46 119.5,45.61 120.0,44.78 120.5,43.96 121.0,43.16 121.5,42.37 122.0,41.60 122.5,40.85 123.0,40.11 123.5,39.38 124.0,38.68 124.5,37.99 125.0,37.32 125.5,36.66 126.0,36.02 126.5,35.40 127.0,34.80 127.5,34.21 128.0,33.64 128.5,33.09 129.0,32.56 129.5,32.05 130.0,31.55 130.5,31.08 131.0,30.62 131.5,30.18 132.0,29.76 132.5,29.36 133.0,28.98 133.5,28.62 134.0,28.28 134.5,27.96 135.0,27.65 135.5,27.37 136.0,27.10 136.5,26.86 137.0,26.64 137.5,26.43 138.0,26.25 138.5,26.09 139.0,25.94 139.5,25.82 140.0,25.71 140.5,25.63 141.0,25.57 141.5,25.53 142.0,25.50 142.5,25.50 143.0,25.52 143.5,25.56 144.0,25.62 144.5,25.70 145.0,25.80 145.5,25.92 146.0,26.05 146.5,26.21 147.0,26.39 147.5,26.59 148.0,26.81 148.5,27.05 149.0,27.31 149.5,27.59 150.0,27.89 150.5,28.21 151.0,28.55 151.5,28.91 152.0,29.29 152.5,29.68 153.0,30.10 153.5,30.53 154.0,30.99 154.5,31.46 155.0,31.95 155.5,32.46 156.0,32.99 156.5,33.53 157.0,34.10 157.5,34.68 158.0,35.28 158.5,35.90 159.0,36.53 159.5,37.18 160.0,37.85 160.5,38.54 161.0,39.24 161.5,39.96 162.0,40.70 162.5,41.45 163.0,42.22 163.5,43.00 164.0,43.80 164.5,44.61 165.0,45.44 165.5,46.29 166.0,47.14 166.5,48.02 167.0,48.90 167.5,49.81 168.0,50.72 168.5,51.65 169.0,52.59 169.5,53.54 170.0,54.51 170.5,55.49 171.0,56.48 171.5,57.48 172.0,58.50 172.5,59.52 173.0,60.56 173.5,61.60 174.0,62.66 174.5,63.73 175.0,64.81 175.5,65.89 176.0,66.99 176.5,68.09 177.0,69.21 177.5,70.33 178.0,71.46 178.5,72.60 179.0,73.74 179.5,74.89 180.0,76.05 180.5,77.22 181.0,78.39 181.5,79.56 182.0,80.75 182.5,81.93 183.0,83.13 183.5,84.32 184.0,85.52 184.5,86.73 185.0,87.94 185.5,89.15 186.0,90.36 186.5,91.58 187.0,92.80 187.5,94.02 188.0,95.24 188.5,96.46 189.0,97.69 189.5,98.91 190.0,100.13 190.5,101.36 191.0,102.58 191.5,103.81 192.0,105.03 192.5,106.25 193.0,107.47 193.5,108.68 194.0,109.90 194.5,111.11 195.0,112.31 195.5,113.52 196.0,114.72 196.5,115.91 197.0,117.10 197.5,118.29 198.0,119.47 198.5,120.65 199.0,121.82 199.5,122.98 200.0,124.14 200.5,125.29 201.0,126.43 201.5,127.57 202.0,128.70 202.5,129.82 203.0,130.93 203.5,132.03 204.0,133.12 204.5,134.21 205.0,135.28 205.5,136.35 206.0,137.41 206.5,138.45 207.0,139.48 207.5,140.51 208.0,141.52 208.5,142.52 209.0,143.51 209.5,144.48 210.0,145.45 210.5,146.40 211.0,147.34 211.5,148.26 212.0,149.18 212.5,150.07 213.0,150.96 213.5,151.83 214.0,152.68 214.5,153.52 215.0,154.35 215.5,155.16 216.0,155.96 216.5,156.74 217.0,157.50 217.5,158.25 218.0,158.98 218.5,159.70 219.0,160.40 219.5,161.08 220.0,161.75 220.5,162.40 221.0,163.03 221.5,163.64 222.0,164.24 222.5,164.82 223.0,165.38 223.5,165.92 224.0,166.44 224.5,166.95 225.0,167.44 225.5,167.91 226.0,168.36 226.5,168.79 227.0,169.20 227.5,169.59 228.0,169.97 228.5,170.32 229.0,170.65 229.5,170.97 230.0,171.26 230.5,171.54 231.0,171.80 231.5,172.03 232.0,172.25 232.5,172.44 233.0,172.62 233.5,172.77 234.0,172.91 234.5,173.03 235.0,173.12 235.5,173.20 236.0,173.25 236.5,173.29 237.0,173.30 237.5,173.29 238.0,173.27 238.5,173.22 239.0,173.15 239.5,173.07 240.0,172.96 240.5,172.83 241.0,172.68 241.5,172.52 242.0,172.33 242.5,172.12 243.0,171.89 243.5,171.64 244.0,171.38 244.5,171.09 245.0,170.78 245.5,170.46 246.0,170.11 246.5,169.74 247.0,169.36 247.5,168.95 248.0,168.53 248.5,168.09 249.0,167.63 249.5,167.15 250.0,166.65 250.5,166.13 251.0,165.60 251.5,165.04 252.0,164.47 252.5,163.88 253.0,163.28 253.5,162.65 254.0,162.01 254.5,161.35 255.0,160.68 255.5,159.98 256.0,159.27 256.5,158.55 257.0,157.80 257.5,157.05 258.0,156.27 258.5,155.48 259.0,154.68 259.5,153.86 260.0,153.02 260.5,152.17 261.0,151.31 261.5,150.43 262.0,149.54 262.5,148.63 263.0,147.71 263.5,146.78 264.0,145.83 264.5,144.87 265.0,143.90 265.5,142.92 266.0,141.92 266.5,140.91 267.0,139.89 267.5,138.87 268.0,137.82 268.5,136.77 269.0,135.71 269.5,134.64 270.0,133.56 270.5,132.47 271.0,131.37 271.5,130.26 272.0,129.14 272.5,128.02 273.0,126.89 273.5,125.75 274.0,124.60 274.5,123.44 275.0,122.28 275.5,121.12 276.0,119.94 276.5,118.76 277.0,117.58 277.5,116.39 278.0,115.20 278.5,114.00 279.0,112.79 279.5,111.59 280.0,110.38 280.5,109.17 281.0,107.95 281.5,106.73 282.0,105.52 282.5,104.29 283.0,103.07 283.5,101.85 284.0,100.62 284.5,99.40 285.0,98.18 285.5,96.95 286.0,95.73 286.5,94.51 287.0,93.28 287.5,92.07 288.0,90.85 288.5,89.63 289.0,88.42 289.5,87.21 290.0,86.01 290.5,84.80 291.0,83.60 291.5,82.41 292.0,81.22 292.5,80.04 293.0,78.86 293.5,77.68 294.0,76.52 294.5,75.36 295.0,74.20 295.5,73.05 296.0,71.91 296.5,70.78 297.0,69.66 297.5,68.54 298.0,67.43 298.5,66.33 299.0,65.24 299.5,64.16 300.0,63.09 300.5,62.03 301.0,60.98 301.5,59.93 302.0,58.91 302.5,57.89 303.0,56.88 303.5,55.88 304.0,54.90 304.5,53.93 305.0,52.97 305.5,52.02 306.0,51.09 306.5,50.17 307.0,49.26 307.5,48.37 308.0,47.49 308.5,46.63 309.0,45.78 309.5,44.94 310.0,44.12 310.5,43.32 311.0,42.53 311.5,41.75 312.0,41.00 312.5,40.25 313.0,39.53 313.5,38.82 314.0,38.12 314.5,37.45 315.0,36.79 315.5,36.15 316.0,35.52 316.5,34.92 317.0,34.33 317.5,33.76 318.0,33.20 318.5,32.67 319.0,32.15 319.5,31.65 320.0,31.17 320.5,30.71 321.0,30.27 321.5,29.85 322.0,29.44 322.5,29.06 323.0,28.69 323.5,28.34 324.0,28.02 324.5,27.71 325.0,27.42 325.5,27.16 326.0,26.91 326.5,26.68 327.0,26.47 327.5,26.28 328.0,26.12 328.5,25.97 329.0,25.84 329.5,25.73 330.0,25.65 330.5,25.58 331.0,25.53 331.5,25.51 332.0,25.50 332.5,25.51 333.0,25.55 333.5,25.60 334.0,25.68 334.5,25.77 335.0,25.89 335.5,26.03 336.0,26.18 336.5,26.36 337.0,26.55 337.5,26.77 338.0,27.00 338.5,27.26 339.0,27.54 339.5,27.83 340.0,28.15 340.5,28.48 341.0,28.83 341.5,29.21 342.0,29.60 342.5,30.01 343.0,30.44 343.5,30.89 344.0,31.36 344.5,31.85 345.0,32.36 345.5,32.88 346.0,33.42 346.5,33.98 347.0,34.56 347.5,35.16 348.0,35.77 348.5,36.40 349.0,37.05 349.5,37.72 350.0,38.40 350.5,39.10 351.0,39.82 351.5,40.55 352.0,41.30 352.5,42.06 353.0,42.84 353.5,43.64 354.0,44.45 354.5,45.28 355.0,46.12 355.5,46.97 356.0,47.84 356.5,48.73 357.0,49.62 357.5,50.54 358.0,51.46 358.5,52.40 359.0,53.35 359.5,54.32 360.0,55.29 360.5,56.28 361.0,57.28 361.5,58.29 362.0,59.32 362.5,60.35 363.0,61.39 363.5,62.45 364.0,63.52 364.5,64.59 365.0,65.68 365.5,66.77 366.0,67.87 366.5,68.98 367.0,70.10 367.5,71.23 368.0,72.37 368.5,73.51 369.0,74.66 369.5,75.82 370.0,76.98 370.5,78.15 371.0,79.33 371.5,80.51 372.0,81.70 372.5,82.89 373.0,84.08 373.5,85.28 374.0,86.49 374.5,87.69 375.0,88.90 375.5,90.12 376.0,91.33 376.5,92.55 377.0,93.77 377.5,94.99 378.0,96.22 378.5,97.44 379.0,98.67 379.5,99.89 380.0,101.11 380.5,102.34 381.0,103.56 381.5,104.78 382.0,106.00 382.5,107.22 383.0,108.44 383.5,109.65 384.0,110.86 384.5,112.07 385.0,113.28 385.5,114.48 386.0,115.67 386.5,116.87 387.0,118.05 387.5,119.24 388.0,120.41 388.5,121.58 389.0,122.75 389.5,123.91 390.0,125.06 390.5,126.20 391.0,127.34 391.5,128.47 392.0,129.59 392.5,130.71 393.0,131.81 393.5,132.91 394.0,133.99 394.5,135.07 395.0,136.14 395.5,137.20 396.0,138.24 396.5,139.28 397.0,140.30 397.5,141.32 398.0,142.32 398.5,143.31 399.0,144.29 399.5,145.26 400.0,146.21 400.5,147.15 401.0,148.08 401.5,148.99 402.0,149.90 402.5,150.78 403.0,151.66 403.5,152.51 404.0,153.36 404.5,154.19 405.0,155.00 405.5,155.80 406.0,156.58 406.5,157.35 407.0,158.10 407.5,158.84 408.0,159.56 408.5,160.26 409.0,160.95 409.5,161.62 410.0,162.27 410.5,162.90 411.0,163.52 411.5,164.12 412.0,164.70 412.5,165.27 413.0,165.81 413.5,166.34 414.0,166.85 414.5,167.34 415.0,167.81 415.5,168.27 416.0,168.70 416.5,169.12 417.0,169.51 417.5,169.89 418.0,170.25 418.5,170.59 419.0,170.91 419.5,171.21 420.0,171.49 420.5,171.75 421.0,171.99 421.5,172.21 422.0,172.41 422.5,172.59 423.0,172.75 423.5,172.88 424.0,173.00 424.5,173.10 425.0,173.18 425.5,173.24 426.0,173.28 426.5,173.30 427.0,173.30 427.5,173.27 428.0,173.23 428.5,173.17 429.0,173.09 429.5,172.98 430.0,172.86 430.5,172.71 431.0,172.55 431.5,172.37 432.0,172.16 432.5,171.94 433.0,171.70 433.5,171.43 434.0,171.15 434.5,170.84 435.0,170.52 435.5,170.18 436.0,169.82 436.5,169.44 437.0,169.04 437.5,168.62 438.0,168.18 438.5,167.72 439.0,167.25 439.5,166.75 440.0,166.24 440.5,165.71 441.0,165.16 441.5,164.59 442.0,164.00 442.5,163.40 443.0,162.78 443.5,162.14 444.0,161.48 444.5,160.81 445.0,160.12 445.5,159.42 446.0,158.69 446.5,157.95 447.0,157.20 447.5,156.43 448.0,155.64 448.5,154.84 449.0,154.02 449.5,153.19 450.0,152.34 450.5,151.48 451.0,150.61 451.5,149.72 452.0,148.81 452.5,147.90 453.0,146.96 453.5,146.02 454.0,145.06 454.5,144.10 455.0,143.11 455.5,142.12 456.0,141.12 456.5,140.10 457.0,139.07 457.5,138.03 458.0,136.98 458.5,135.93 459.0,134.86 459.5,133.78 460.0,132.69 460.5,131.59 461.0,130.48 461.5,129.37 462.0,128.24 462.5,127.11 463.0,125.97 463.5,124.83 464.0,123.68 464.5,122.52 465.0,121.35 465.5,120.18 466.0,119.00 466.5,117.82 467.0,116.63 467.5,115.43 468.0,114.24 468.5,113.04 469.0,111.83 469.5,110.62 470.0,109.41 470.5,108.20 471.0,106.98 471.5,105.76 472.0,104.54 472.5,103.32 473.0,102.09 473.5,100.87 474.0,99.64 474.5,98.42 475.0,97.20 475.5,95.97 476.0,94.75 476.5,93.53 477.0,92.31 477.5,91.09 478.0,89.88 478.5,88.66 479.0,87.45 479.5,86.25 480.0,85.04 480.5,83.84 481.0,82.65 481.5,81.46 482.0,80.27 482.5,79.09 483.0,77.92 483.5,76.75 484.0,75.59 484.5,74.43 485.0,73.28 485.5,72.14 486.0,71.01 486.5,69.88 487.0,68.76 487.5,67.65 488.0,66.55 488.5,65.46 489.0,64.37 489.5,63.30 490.0,62.24 490.5,61.18 491.0,60.14 491.5,59.11 492.0,58.09 492.5,57.08 493.0,56.08 493.5,55.10 494.0,54.12 494.5,53.16 495.0,52.21 495.5,51.28 496.0,50.35 496.5,49.44 497.0,48.55 497.5,47.67 498.0,46.80 498.5,45.95 499.0,45.11 499.5,44.29 500.0,43.48 500.5,42.68 501.0,41.91 501.5,41.15 502.0,40.40 502.5,39.67 503.0,38.96 503.5,38.26 504.0,37.58 504.5,36.92 505.0,36.28 505.5,35.65 506.0,35.04 506.5,34.44 507.0,33.87 507.5,33.31 508.0,32.77 508.5,32.25 509.0,31.75 509.5,31.27 510.0,30.80 510.5,30.36 511.0,29.93 511.5,29.52 512.0,29.13 512.5,28.76 513.0,28.41 513.5,28.08 514.0,27.77 514.5,27.48 515.0,27.21 515.5,26.96 516.0,26.72 516.5,26.51 517.0,26.32 517.5,26.15 518.0,26.00 518.5,25.86 519.0,25.75 519.5,25.66 520.0,25.59 520.5,25.54 521.0,25.51 521.5,25.50 522.0,25.51 522.5,25.54 523.0,25.59 523.5,25.66 524.0,25.75 524.5,25.86 525.0,26.00 525.5,26.15 526.0,26.32 526.5,26.51 527.0,26.72 527.5,26.96 528.0,27.21 528.5,27.48 529.0,27.77 529.5,28.08 530.0,28.41 530.5,28.76 531.0,29.13 531.5,29.52 532.0,29.93 532.5,30.36 533.0,30.80 533.5,31.27 534.0,31.75 534.5,32.25 535.0,32.77 535.5,33.31 536.0,33.87 536.5,34.44 537.0,35.04 537.5,35.65 538.0,36.28 538.5,36.92 539.0,37.58 539.5,38.26 540.0,38.96 540.5,39.67 541.0,40.40 541.5,41.15 542.0,41.91 542.5,42.68 543.0,43.48 543.5,44.29 544.0,45.11 544.5,45.95 545.0,46.80 545.5,47.67 546.0,48.55 546.5,49.44 547.0,50.35 547.5,51.28 548.0,52.21 548.5,53.16 549.0,54.12 549.5,55.10 550.0,56.08 550.5,57.08 551.0,58.09 551.5,59.11 552.0,60.14 552.5,61.18 553.0,62.24 553.5,63.30 554.0,64.37 554.5,65.46 555.0,66.55 555.5,67.65 556.0,68.76 556.5,69.88 557.0,71.01 557.5,72.14 558.0,73.28 558.5,74.43 559.0,75.59 559.5,76.75 560.0,77.92 560.5,79.09 561.0,80.27 561.5,81.46 562.0,82.65 562.5,83.84 563.0,85.04 563.5,86.25 564.0,87.45 564.5,88.66 565.0,89.88 565.5,91.09 566.0,92.31 566.5,93.53 567.0,94.75 567.5,95.97 568.0,97.20 568.5,98.42 569.0,99.64 569.5,100.87 570.0,102.09 570.5,103.32 571.0,104.54 571.5,105.76 572.0,106.98 572.5,108.20 573.0,109.41 573.5,110.62 574.0,111.83 574.5,113.04 575.0,114.24 575.5,115.43 576.0,116.63 576.5,117.82 577.0,119.00 577.5,120.18 578.0,121.35 578.5,122.52 579.0,123.68 579.5,124.83 580.0,125.97 580.5,127.11 581.0,128.24 581.5,129.37 582.0,130.48 582.5,131.59 583.0,132.69 583.5,133.78 584.0,134.86 584.5,135.93 585.0,136.98 585.5,138.03 586.0,139.07 586.5,140.10 587.0,141.12 587.5,142.12 588.0,143.11 588.5,144.10 589.0,145.06 589.5,146.02 590.0,146.96 590.5,147.90 591.0,148.81 591.5,149.72 592.0,150.61 592.5,151.48 593.0,152.34 593.5,153.19 594.0,154.02 594.5,154.84 595.0,155.64 595.5,156.43 596.0,157.20 596.5,157.95 597.0,158.69 597.5,159.42 598.0,160.12 598.5,160.81 599.0,161.48 599.5,162.14 600.0,162.78 600.5,163.40 601.0,164.00 601.5,164.59 602.0,165.16 602.5,165.71 603.0,166.24 603.5,166.75 604.0,167.25 604.5,167.72 605.0,168.18 605.5,168.62 606.0,169.04 606.5,169.44 607.0,169.82 607.5,170.18 608.0,170.52 608.5,170.84 609.0,171.15 609.5,171.43 610.0,171.70 610.5,171.94 611.0,172.16 611.5,172.37 612.0,172.55 612.5,172.71 613.0,172.86 613.5,172.98 614.0,173.09 614.5,173.17 615.0,173.23 615.5,173.27 616.0,173.30 616.5,173.30 617.0,173.28 617.5,173.24 618.0,173.18 618.5,173.10 619.0,173.00 619.5,172.88 620.0,172.75 620.5,172.59 621.0,172.41 621.5,172.21 622.0,171.99 622.5,171.75 623.0,171.49 623.5,171.21 624.0,170.91 624.5,170.59 625.0,170.25 625.5,169.89 626.0,169.51 626.5,169.12 627.0,168.70 627.5,168.27 628.0,167.81 628.5,167.34 629.0,166.85 629.5,166.34 630.0,165.81 630.5,165.27 631.0,164.70 631.5,164.12 632.0,163.52 632.5,162.90 633.0,162.27 633.5,161.62 634.0,160.95 634.5,160.26 635.0,159.56 635.5,158.84 636.0,158.10 636.5,157.35 637.0,156.58 637.5,155.80 638.0,155.00 638.5,154.19 639.0,153.36 639.5,152.51 640.0,151.66 640.5,150.78 641.0,149.90 641.5,148.99 642.0,148.08 642.5,147.15 643.0,146.21 643.5,145.26 644.0,144.29 644.5,143.31 645.0,142.32 645.5,141.32 646.0,140.30 646.5,139.28 647.0,138.24 647.5,137.20 648.0,136.14 648.5,135.07 649.0,133.99 649.5,132.91 650.0,131.81 650.5,130.71 651.0,129.59 651.5,128.47 652.0,127.34 652.5,126.20 653.0,125.06 653.5,123.91 654.0,122.75 654.5,121.58 655.0,120.41 655.5,119.24 656.0,118.05 656.5,116.87 657.0,115.67 657.5,114.48 658.0,113.28 658.5,112.07 659.0,110.86 659.5,109.65 660.0,108.44 660.5,107.22 661.0,106.00 661.5,104.78 662.0,103.56 662.5,102.34 663.0,101.11 663.5,99.89 664.0,98.67 664.5,97.44 665.0,96.22 665.5,94.99 666.0,93.77 666.5,92.55 667.0,91.33 667.5,90.12 668.0,88.90 668.5,87.69 669.0,86.49 669.5,85.28 670.0,84.08 670.5,82.89 671.0,81.70 671.5,80.51 672.0,79.33 672.5,78.15 673.0,76.98 673.5,75.82 674.0,74.66 674.5,73.51 675.0,72.37 675.5,71.23 676.0,70.10 676.5,68.98 677.0,67.87 677.5,66.77 678.0,65.68 678.5,64.59 679.0,63.52 679.5,62.45 680.0,61.39 680.5,60.35 681.0,59.32 681.5,58.29 682.0,57.28 682.5,56.28 683.0,55.29 683.5,54.32 684.0,53.35 684.5,52.40 685.0,51.46 685.5,50.54 686.0,49.62 686.5,48.73 687.0,47.84 687.5,46.97 688.0,46.12 688.5,45.28 689.0,44.45 689.5,43.64 690.0,42.84 690.5,42.06 691.0,41.30 691.5,40.55 692.0,39.82 692.5,39.10 693.0,38.40 693.5,37.72 694.0,37.05 694.5,36.40 695.0,35.77 695.5,35.16 696.0,34.56 696.5,33.98 697.0,33.42 697.5,32.88 698.0,32.36 698.5,31.85 699.0,31.36 699.5,30.89 700.0,30.44 700.5,30.01 701.0,29.60 701.5,29.21 702.0,28.83 702.5,28.48 703.0,28.15 703.5,27.83 704.0,27.54 704.5,27.26 705.0,27.00 705.5,26.77 706.0,26.55 706.5,26.36 707.0,26.18 707.5,26.03 708.0,25.89 708.5,25.77 709.0,25.68 709.5,25.60 710.0,25.55 710.5,25.51 711.0,25.50 711.5,25.51 712.0,25.53 712.5,25.58 713.0,25.65 713.5,25.73 714.0,25.84 714.5,25.97 715.0,26.12 715.5,26.28 716.0,26.47 716.5,26.68 717.0,26.91 717.5,27.16 718.0,27.42 718.5,27.71 719.0,28.02 719.5,28.34 720.0,28.69 720.5,29.06 721.0,29.44 721.5,29.85 722.0,30.27 722.5,30.71 723.0,31.17 723.5,31.65 724.0,32.15 724.5,32.67 725.0,33.20 725.5,33.76 726.0,34.33 726.5,34.92 727.0,35.52 727.5,36.15 728.0,36.79 728.5,37.45 729.0,38.12 729.5,38.82 730.0,39.53 730.5,40.25 731.0,41.00 731.5,41.75 732.0,42.53 732.5,43.32 733.0,44.12 733.5,44.94 734.0,45.78 734.5,46.63 735.0,47.49 735.5,48.37 736.0,49.26 736.5,50.17 737.0,51.09 737.5,52.02 738.0,52.97 738.5,53.93 739.0,54.90 739.5,55.88 740.0,56.88 740.5,57.89 741.0,58.91 741.5,59.93 742.0,60.98 742.5,62.03 743.0,63.09 743.5,64.16 744.0,65.24 744.5,66.33 745.0,67.43 745.5,68.54 746.0,69.66 746.5,70.78 747.0,71.91 747.5,73.05 748.0,74.20 748.5,75.36 749.0,76.52 749.5,77.68 750.0,78.86 750.5,80.04 751.0,81.22 751.5,82.41 752.0,83.60 752.5,84.80 753.0,86.01 753.5,87.21 754.0,88.42 754.5,89.63 755.0,90.85 755.5,92.07 756.0,93.28 756.5,94.51 757.0,95.73 757.5,96.95 758.0,98.18 758.5,99.40 759.0,100.62 759.5,101.85 760.0,103.07 760.5,104.29 761.0,105.52 761.5,106.73 762.0,107.95 762.5,109.17 763.0,110.38 763.5,111.59 764.0,112.79 764.5,114.00 765.0,115.20 765.5,116.39 766.0,117.58 766.5,118.76 767.0,119.94 767.5,121.12 768.0,122.28 768.5,123.44 769.0,124.60 769.5,125.75 770.0,126.89 770.5,128.02 771.0,129.14 771.5,130.26 772.0,131.37 772.5,132.47 773.0,133.56 773.5,134.64 774.0,135.71 774.5,136.77 775.0,137.82 775.5,138.87 776.0,139.89 776.5,140.91 777.0,141.92 777.5,142.92 778.0,143.90 778.5,144.87 779.0,145.83 779.5,146.78 780.0,147.71 780.5,148.63 781.0,149.54 781.5,150.43 782.0,151.31 782.5,152.17 783.0,153.02 783.5,153.86 784.0,154.68 784.5,155.48 785.0,156.27 785.5,157.05 786.0,157.80 786.5,158.55 787.0,159.27 787.5,159.98 788.0,160.68 788.5,161.35 789.0,162.01 789.5,162.65 790.0,163.28 790.5,163.88 791.0,164.47 791.5,165.04 792.0,165.60 792.5,166.13 793.0,166.65 793.5,167.15 794.0,167.63 794.5,168.09 795.0,168.53 795.5,168.95 796.0,169.36 796.5,169.74 797.0,170.11 797.5,170.46 798.0,170.78 798.5,171.09 799.0,171.38 799.5,171.64 800.0,171.89 800.5,172.12 801.0,172.33 801.5,172.52 802.0,172.68 802.5,172.83 803.0,172.96 803.5,173.07 804.0,173.15 804.5,173.22 805.0,173.27 805.5,173.29 806.0,173.30 806.5,173.29 807.0,173.25 807.5,173.20 808.0,173.12 808.5,173.03 809.0,172.91 809.5,172.77 810.0,172.62 810.5,172.44 811.0,172.25 811.5,172.03 812.0,171.80 812.5,171.54 813.0,171.26 813.5,170.97 814.0,170.65 814.5,170.32 815.0,169.97 815.5,169.59 816.0,169.20 816.5,168.79 817.0,168.36 817.5,167.91 818.0,167.44 818.5,166.95 819.0,166.44 819.5,165.92 820.0,165.38 820.5,164.82 821.0,164.24 821.5,163.64 822.0,163.03 822.5,162.40 823.0,161.75 823.5,161.08 824.0,160.40 824.5,159.70 825.0,158.98 825.5,158.25 826.0,157.50 826.5,156.74 827.0,155.96 827.5,155.16 828.0,154.35 828.5,153.52 829.0,152.68 829.5,151.83 830.0,150.96 830.5,150.07 831.0,149.18 831.5,148.26 832.0,147.34 832.5,146.40 833.0,145.45 833.5,144.48 834.0,143.51 834.5,142.52 835.0,141.52 835.5,140.51 836.0,139.48 836.5,138.45 837.0,137.41 837.5,136.35 838.0,135.28 838.5,134.21 839.0,133.12 839.5,132.03 840.0,130.93 840.5,129.82 841.0,128.70 841.5,127.57 842.0,126.43 842.5,125.29 843.0,124.14 843.5,122.98 844.0,121.82 844.5,120.65 845.0,119.47 845.5,118.29 846.0,117.10 846.5,115.91 847.0,114.72 847.5,113.52 848.0,112.31 848.5,111.11 849.0,109.90 849.5,108.68 850.0,107.47 850.5,106.25 851.0,105.03 851.5,103.81 852.0,102.58 852.5,101.36 853.0,100.13 853.5,98.91 854.0,97.69 854.5,96.46 855.0,95.24 855.5,94.02 856.0,92.80 856.5,91.58 857.0,90.36 857.5,89.15 858.0,87.94 858.5,86.73 859.0,85.52 859.5,84.32 860.0,83.13 860.5,81.93 861.0,80.75 861.5,79.56 862.0,78.39 862.5,77.22 863.0,76.05 863.5,74.89 864.0,73.74 864.5,72.60 865.0,71.46 865.5,70.33 866.0,69.21 866.5,68.09 867.0,66.99 867.5,65.89 868.0,64.81 868.5,63.73 869.0,62.66 869.5,61.60 870.0,60.56 870.5,59.52 871.0,58.50 871.5,57.48 872.0,56.48 872.5,55.49 873.0,54.51 873.5,53.54 874.0,52.59 874.5,51.65 875.0,50.72 875.5,49.81 876.0,48.90 876.5,48.02 877.0,47.14 877.5,46.29 878.0,45.44 878.5,44.61 879.0,43.80 879.5,43.00 880.0,42.22 880.5,41.45 881.0,40.70 881.5,39.96 882.0,39.24 882.5,38.54 883.0,37.85 883.5,37.18 884.0,36.53 884.5,35.90 885.0,35.28 885.5,34.68 886.0,34.10 886.5,33.53 887.0,32.99 887.5,32.46 888.0,31.95 888.5,31.46 889.0,30.99 889.5,30.53 890.0,30.10 890.5,29.68 891.0,29.29 891.5,28.91 892.0,28.55 892.5,28.21 893.0,27.89 893.5,27.59 894.0,27.31 894.5,27.05 895.0,26.81 895.5,26.59 896.0,26.39 896.5,26.21 897.0,26.05 897.5,25.92 898.0,25.80 898.5,25.70 899.0,25.62 899.5,25.56 900.0,25.52 900.5,25.50 901.0,25.50 901.5,25.53 902.0,25.57 902.5,25.63 903.0,25.71 903.5,25.82 904.0,25.94 904.5,26.09 905.0,26.25 905.5,26.43 906.0,26.64 906.5,26.86 907.0,27.10 907.5,27.37 908.0,27.65 908.5,27.96 909.0,28.28 909.5,28.62 910.0,28.98 910.5,29.36 911.0,29.76 911.5,30.18 912.0,30.62 912.5,31.08 913.0,31.55 913.5,32.05 914.0,32.56 914.5,33.09 915.0,33.64 915.5,34.21 916.0,34.80 916.5,35.40 917.0,36.02 917.5,36.66 918.0,37.32 918.5,37.99 919.0,38.68 919.5,39.38 920.0,40.11 920.5,40.85 921.0,41.60 921.5,42.37 922.0,43.16 922.5,43.96 923.0,44.78 923.5,45.61 924.0,46.46 924.5,47.32 925.0,48.19 925.5,49.08 926.0,49.99 926.5,50.90 927.0,51.84 927.5,52.78 928.0,53.74 928.5,54.70 929.0,55.69 929.5,56.68 930.0,57.68 930.5,58.70 931.0,59.73 931.5,60.77 932.0,61.82 932.5,62.87 933.0,63.94 933.5,65.02 934.0,66.11 934.5,67.21 935.0,68.32 935.5,69.43 936.0,70.56 936.5,71.69 937.0,72.83 937.5,73.97 938.0,75.12 938.5,76.28 939.0,77.45" fill="none" stroke="#0000ff" stroke-width="1.15"/><rect x="0.5" y="0.5" width="938" height="199" fill="none" stroke="#000"/></svg>
<div style="position:absolute;left:971px;top:439px;width:937px;height:329px;border:1px solid #d5dfe5;border-radius:3px;box-sizing:border-box"></div>
<div style="position:absolute;left:976.5px;top:437px;width:49px;height:5px;background:#fdfdfd"></div>
<div style="position:absolute;left:979.50px;top:433.84px;font-family:&quot;Liberation Sans&quot;,sans-serif;font-size:12px;line-height:12px;font-weight:400;color:#1b1b1b;white-space:pre;letter-spacing:-0.170px;">Settings</div>
<div style="position:absolute;left:978px;top:457px;width:234px;height:305px;border:1px solid #d5dfe5;border-radius:3px;box-sizing:border-box"></div>
<div style="position:absolute;left:982.4px;top:455px;width:73px;height:5px;background:#fdfdfd"></div>
<div style="position:absolute;left:985.40px;top:450.84px;font-family:&quot;Liberation Sans&quot;,sans-serif;font-size:12px;line-height:12px;font-weight:400;color:#1b1b1b;white-space:pre;letter-spacing:-0.169px;">Oscilloscope</div>
<div style="position:absolute;left:1225px;top:457px;width:345px;height:305px;border:1px solid #d5dfe5;border-radius:3px;box-sizing:border-box"></div>
<div style="position:absolute;left:1229.2px;top:455px;width:80.5px;height:5px;background:#fdfdfd"></div>
<div style="position:absolute;left:1232.20px;top:450.64px;font-family:&quot;Liberation Sans&quot;,sans-serif;font-size:12px;line-height:12px;font-weight:400;color:#1b1b1b;white-space:pre;letter-spacing:0.071px;">Manual mode</div>
<div style="position:absolute;left:987.50px;top:471.54px;font-family:&quot;Liberation Sans&quot;,sans-serif;font-size:12px;line-height:12px;font-weight:400;color:#1b1b1b;white-space:pre;letter-spacing:-0.094px;">The scale of the time axis  (ms/div)</div>
<div style="position:absolute;left:987px;top:490px;width:209px;height:24px;background:#efefef;border:1px solid #c9c9c9;box-sizing:border-box"></div>
<div style="position:absolute;left:992.00px;top:496.14px;font-family:&quot;Liberation Sans&quot;,sans-serif;font-size:12px;line-height:12px;font-weight:400;color:#7c7c7c;white-space:pre;">0.5</div>
<svg style="position:absolute;left:1183px;top:499.0px" width="8" height="6" viewBox="0 0 8 6"><path d="M1 1l3 3 3-3" stroke="#bdbdbd" fill="none" stroke-width="1.2"/></svg>
<div style="position:absolute;left:987.50px;top:531.54px;font-family:&quot;Liberation Sans&quot;,sans-serif;font-size:12px;line-height:12px;font-weight:400;color:#1b1b1b;white-space:pre;letter-spacing:-0.295px;">Reference sensor</div>
<div style="position:absolute;left:987px;top:546px;width:137px;height:4px;background:#ff0000"></div>
<div style="position:absolute;left:987.50px;top:567.14px;font-family:&quot;Liberation Sans&quot;,sans-serif;font-size:12px;line-height:12px;font-weight:400;color:#1b1b1b;white-space:pre;letter-spacing:-0.178px;">The sensor being checked</div>
<div style="position:absolute;left:987px;top:582px;width:137px;height:4px;background:#0000ff"></div>
<div style="position:absolute;left:1129px;top:524px;width:60px;height:25px;background:#efefef;border:1px solid #c9c9c9;box-sizing:border-box"></div>
<div style="position:absolute;left:1134.00px;top:530.64px;font-family:&quot;Liberation Sans&quot;,sans-serif;font-size:12px;line-height:12px;font-weight:400;color:#7c7c7c;white-space:pre;">0.5</div>
<svg style="position:absolute;left:1176px;top:533.5px" width="8" height="6" viewBox="0 0 8 6"><path d="M1 1l3 3 3-3" stroke="#bdbdbd" fill="none" stroke-width="1.2"/></svg>
<div style="position:absolute;left:1129px;top:560px;width:60px;height:25px;background:#efefef;border:1px solid #c9c9c9;box-sizing:border-box"></div>
<div style="position:absolute;left:1134.00px;top:566.64px;font-family:&quot;Liberation Sans&quot;,sans-serif;font-size:12px;line-height:12px;font-weight:400;color:#7c7c7c;white-space:pre;">0.005</div>
<svg style="position:absolute;left:1176px;top:569.5px" width="8" height="6" viewBox="0 0 8 6"><path d="M1 1l3 3 3-3" stroke="#bdbdbd" fill="none" stroke-width="1.2"/></svg>
<div style="position:absolute;left:1194.70px;top:531.84px;font-family:&quot;Liberation Sans&quot;,sans-serif;font-size:12px;line-height:12px;font-weight:400;color:#1b1b1b;white-space:pre;">g</div>
<div style="position:absolute;left:1194.70px;top:568.14px;font-family:&quot;Liberation Sans&quot;,sans-serif;font-size:12px;line-height:12px;font-weight:400;color:#1b1b1b;white-space:pre;">V</div>
<div style="position:absolute;left:1130px;top:607px;width:14px;height:13px;background:#fff;border:1px solid #333;box-sizing:border-box"></div>
<svg style="position:absolute;left:1131px;top:607px" width="12" height="12" viewBox="0 0 12 12"><path d="M2 6l3 3.5 5.5-7" stroke="#111" stroke-width="1.8" fill="none"/></svg>
<div style="position:absolute;left:1149.30px;top:607.74px;font-family:&quot;Liberation Sans&quot;,sans-serif;font-size:12px;line-height:12px;font-weight:400;color:#1b1b1b;white-space:pre;letter-spacing:-0.134px;">Autoscale</div>
<div style="position:absolute;left:1234.10px;top:477.34px;font-family:&quot;Liberation Sans&quot;,sans-serif;font-size:12px;line-height:12px;font-weight:400;color:#1b1b1b;white-space:pre;letter-spacing:-0.245px;">Frequency</div>
<div style="position:absolute;left:1298px;top:469px;width:100px;height:26px;background:#fff;border:1px solid #ababab;box-sizing:border-box"></div>
<div style="position:absolute;left:1302.00px;top:477.34px;font-family:&quot;Liberation Sans&quot;,sans-serif;font-size:12px;line-height:12px;font-weight:400;color:#1b1b1b;white-space:pre;letter-spacing:-0.426px;">1000</div>
<div style="position:absolute;left:1403.50px;top:477.34px;font-family:&quot;Liberation Sans&quot;,sans-serif;font-size:12px;line-height:12px;font-weight:400;color:#1b1b1b;white-space:pre;letter-spacing:-0.586px;">Hz</div>
<div style="position:absolute;left:1234.10px;top:508.04px;font-family:&quot;Liberation Sans&quot;,sans-serif;font-size:12px;line-height:12px;font-weight:400;color:#1b1b1b;white-space:pre;letter-spacing:-0.338px;">Level</div>
<div style="position:absolute;left:1298px;top:500px;width:100px;height:26px;background:#fff;border:1px solid #ababab;box-sizing:border-box"></div>
<div style="position:absolute;left:1302.00px;top:508.04px;font-family:&quot;Liberation Sans&quot;,sans-serif;font-size:12px;line-height:12px;font-weight:400;color:#1b1b1b;white-space:pre;">1</div>
<div style="position:absolute;left:1403px;top:500px;width:51px;height:26px;background:#e9e9e9;border:1px solid #acacac;box-sizing:border-box"></div>
<div style="position:absolute;left:1408.00px;top:507.14px;font-family:&quot;Liberation Sans&quot;,sans-serif;font-size:12px;line-height:12px;font-weight:400;color:#1b1b1b;white-space:pre;">g</div>
<svg style="position:absolute;left:1441px;top:510.0px" width="8" height="6" viewBox="0 0 8 6"><path d="M1 1l3 3 3-3" stroke="#555" fill="none" stroke-width="1.2"/></svg>
<div style="position:absolute;left:1459px;top:500px;width:101px;height:26px;background:#e9e9e9;border:1px solid #acacac;box-sizing:border-box"></div>
<div style="position:absolute;left:1464.00px;top:507.14px;font-family:&quot;Liberation Sans&quot;,sans-serif;font-size:12px;line-height:12px;font-weight:400;color:#1b1b1b;white-space:pre;">RMS</div>
<svg style="position:absolute;left:1547px;top:510.0px" width="8" height="6" viewBox="0 0 8 6"><path d="M1 1l3 3 3-3" stroke="#555" fill="none" stroke-width="1.2"/></svg>
<svg style="position:absolute;left:1230px;top:527px" width="20" height="20" viewBox="0 0 20 20"><circle cx="10" cy="10" r="8.7" fill="none" stroke="#333" stroke-width="1.2"/><path d="M6.5 11.5l3.5-3.5 3.5 3.5" stroke="#222" stroke-width="1.6" fill="none"/></svg>
<div style="position:absolute;left:1253.90px;top:531.74px;font-family:&quot;Liberation Sans&quot;,sans-serif;font-size:12px;line-height:12px;font-weight:400;color:#1b1b1b;white-space:pre;letter-spacing:-0.306px;">Reference values</div>
<div style="position:absolute;left:1350.10px;top:560.84px;font-family:&quot;Liberation Sans&quot;,sans-serif;font-size:12px;line-height:12px;font-weight:400;color:#1b1b1b;white-space:pre;letter-spacing:-0.891px;">RMS</div>
<div style="position:absolute;left:1449.90px;top:560.84px;font-family:&quot;Liberation Sans&quot;,sans-serif;font-size:12px;line-height:12px;font-weight:400;color:#1b1b1b;white-space:pre;letter-spacing:-0.004px;">Amp.</div>
<div style="position:absolute;left:1239.70px;top:592.14px;font-family:&quot;Liberation Sans&quot;,sans-serif;font-size:12px;line-height:12px;font-weight:400;color:#1b1b1b;white-space:pre;">Acceleration,g</div>
<div style="position:absolute;left:1349.80px;top:592.14px;font-family:&quot;Liberation Sans&quot;,sans-serif;font-size:12px;line-height:12px;font-weight:400;color:#1b1b1b;white-space:pre;">0</div>
<div style="position:absolute;left:1449.50px;top:592.14px;font-family:&quot;Liberation Sans&quot;,sans-serif;font-size:12px;line-height:12px;font-weight:400;color:#1b1b1b;white-space:pre;">0</div>
<div style="position:absolute;left:1239.70px;top:622.24px;font-family:&quot;Liberation Sans&quot;,sans-serif;font-size:12px;line-height:12px;font-weight:400;color:#1b1b1b;white-space:pre;">Velocity,m/s</div>
<div style="position:absolute;left:1349.80px;top:622.24px;font-family:&quot;Liberation Sans&quot;,sans-serif;font-size:12px;line-height:12px;font-weight:400;color:#1b1b1b;white-space:pre;">0</div>
<div style="position:absolute;left:1449.50px;top:622.24px;font-family:&quot;Liberation Sans&quot;,sans-serif;font-size:12px;line-height:12px;font-weight:400;color:#1b1b1b;white-space:pre;">0</div>
<div style="position:absolute;left:1239.70px;top:654.14px;font-family:&quot;Liberation Sans&quot;,sans-serif;font-size:12px;line-height:12px;font-weight:400;color:#1b1b1b;white-space:pre;">Displacement,mm</div>
<div style="position:absolute;left:1349.80px;top:654.14px;font-family:&quot;Liberation Sans&quot;,sans-serif;font-size:12px;line-height:12px;font-weight:400;color:#1b1b1b;white-space:pre;">0</div>
<div style="position:absolute;left:1449.50px;top:654.14px;font-family:&quot;Liberation Sans&quot;,sans-serif;font-size:12px;line-height:12px;font-weight:400;color:#1b1b1b;white-space:pre;">0</div>
<div style="position:absolute;left:1229px;top:678px;width:225px;height:23px;background:#dcdcdc;border:1px solid #707070;box-sizing:border-box"></div>
<div style="position:absolute;left:1316.48px;top:684.34px;font-family:&quot;Liberation Sans&quot;,sans-serif;font-size:12px;line-height:12px;font-weight:400;color:#1b1b1b;white-space:pre;">Generate</div>
<div style="position:absolute;left:1229px;top:706px;width:225px;height:23px;background:#dcdcdc;border:1px solid #707070;box-sizing:border-box"></div>
<div style="position:absolute;left:1329.16px;top:712.34px;font-family:&quot;Liberation Sans&quot;,sans-serif;font-size:12px;line-height:12px;font-weight:400;color:#1b1b1b;white-space:pre;">Stop</div>
<div style="position:absolute;left:1229px;top:734px;width:225px;height:23px;background:#dcdcdc;border:1px solid #707070;box-sizing:border-box"></div>
<div style="position:absolute;left:1303.15px;top:740.34px;font-family:&quot;Liberation Sans&quot;,sans-serif;font-size:12px;line-height:12px;font-weight:400;color:#1b1b1b;white-space:pre;">DC measuring</div></body></html>
